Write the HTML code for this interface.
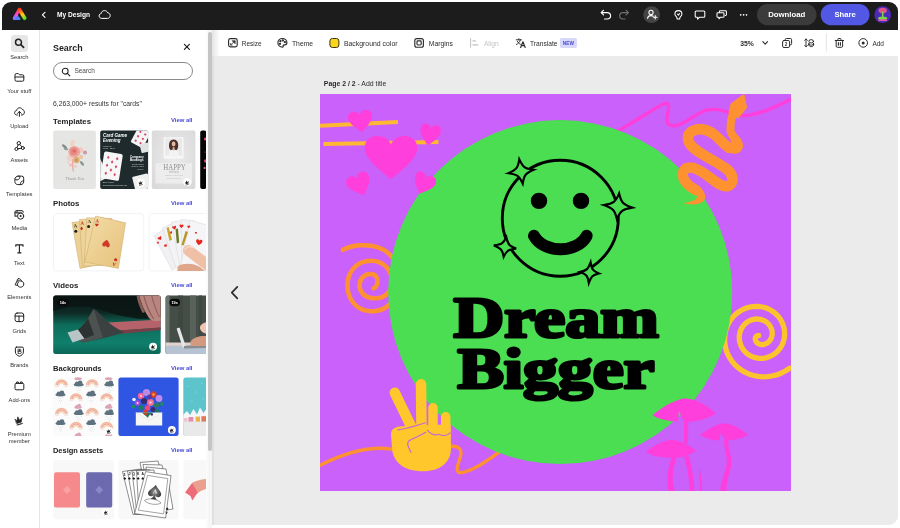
<!DOCTYPE html>
<html lang="en">
<head>
<meta charset="utf-8">
<title>My Design</title>
<style>
*{box-sizing:border-box;margin:0;padding:0}
html,body{width:900px;height:528px;overflow:hidden;background:#fff}
body{font-family:"Liberation Sans",sans-serif;color:#222;position:relative;-webkit-font-smoothing:antialiased}
.abs{position:absolute}
#hdr,#nav,#panel,#tb,#cv{will-change:transform}
#hdr{position:absolute;left:2px;top:2px;width:896px;height:27.5px;background:#1c1c1c;border-radius:9px 9px 0 0}
#hdr .t{position:absolute;color:#fff;font-size:7px;font-weight:bold;white-space:nowrap}
#nav{position:absolute;left:2px;top:30px;width:37.5px;height:498px;background:#fff;border-right:1px solid #e6e6e6}
.ni{position:absolute;left:-1.2px;width:37px;text-align:center;font-size:5.8px;color:#333;line-height:7.5px;white-space:nowrap}
.ni svg{display:block;margin:0 auto}
#panel{position:absolute;left:40px;top:30px;width:166px;height:498px;background:#fff;overflow:hidden}
.h2{position:absolute;left:13px;font-size:7.8px;font-weight:bold;color:#222;white-space:nowrap}
.va{position:absolute;right:13.5px;font-size:5.9px;font-weight:bold;color:#4a4ad6;white-space:nowrap}
.th{position:absolute;border-radius:2px;overflow:hidden}
.th svg{display:block}
#tb{position:absolute;left:213px;top:29.5px;width:685px;height:26.5px;background:#fff}
.tt{position:absolute;top:9.8px;font-size:6.5px;color:#2c2c2c;white-space:nowrap;line-height:8px}
#cv{position:absolute;left:213px;top:56px;width:685px;height:468.5px;background:#ebebeb;border-radius:0 0 9px 0}
</style>
</head>
<body>
<!-- HEADER -->
<div id="hdr">
<svg class="abs" style="left:0;top:0" width="896" height="28" viewBox="2 2 896 28">
<defs>
<linearGradient id="lgL" gradientUnits="userSpaceOnUse" x1="19.5" y1="8" x2="14" y2="20">
<stop offset="0" stop-color="#ff2a1a"/><stop offset="0.3" stop-color="#ff3f8e"/><stop offset="0.6" stop-color="#f050e0"/><stop offset="0.85" stop-color="#b766ff"/><stop offset="1" stop-color="#8a7aff"/>
</linearGradient>
<linearGradient id="lgF" gradientUnits="userSpaceOnUse" x1="13" y1="18" x2="21" y2="18">
<stop offset="0" stop-color="#b070ff"/><stop offset="0.4" stop-color="#5a78ff"/><stop offset="1" stop-color="#2e9cff"/>
</linearGradient>
<linearGradient id="lgR" gradientUnits="userSpaceOnUse" x1="19.5" y1="8" x2="25" y2="20">
<stop offset="0" stop-color="#ff2a1a"/><stop offset="0.3" stop-color="#ff7a10"/><stop offset="0.55" stop-color="#ffcc18"/><stop offset="0.8" stop-color="#8ee020"/><stop offset="1" stop-color="#22dd22"/>
</linearGradient>
</defs>
<!-- logo -->
<g fill="none" stroke-linecap="round" stroke-linejoin="round">
<path d="M19.5,9.6 L14.7,18.2" stroke="url(#lgL)" stroke-width="3.7"/>
<path d="M14.7,18.25 L19.4,18.25" stroke="url(#lgF)" stroke-width="3.5"/>
<path d="M19.4,13.2 L23,20.8" stroke="#1c1c1c" stroke-width="3.2" stroke-linecap="butt"/>
<path d="M19.5,9.6 L24.7,18.2" stroke="url(#lgR)" stroke-width="3.7"/>
</g>
<!-- back chevron -->
<path d="M45,12.4 L42.4,14.9 L45,17.4" fill="none" stroke="#fff" stroke-width="1.15" stroke-linecap="round" stroke-linejoin="round"/>
<!-- cloud -->
<path d="M101.8,18.4 C100,18.4 99.1,17.1 99.1,15.9 C99.1,14.6 100,13.6 101.2,13.5 C101.4,11.8 102.8,10.6 104.5,10.6 C106,10.6 107.2,11.5 107.7,12.8 C109.2,12.9 110.2,14.1 110.2,15.5 C110.2,17.1 109,18.4 107.4,18.4 Z" fill="none" stroke="#fff" stroke-width="1" stroke-linejoin="round"/>
<!-- undo -->
<g fill="none" stroke="#fff" stroke-width="1.2" stroke-linecap="round" stroke-linejoin="round">
<path d="M603.4,10.3 L601.2,12.6 L603.6,14.9"/>
<path d="M601.5,12.6 L607,12.6 C609.2,12.6 610.6,14 610.6,15.8 C610.6,17.6 609.2,19 607,19 L604.6,19"/>
</g>
<!-- redo -->
<g fill="none" stroke="#6e6e6e" stroke-width="1.2" stroke-linecap="round" stroke-linejoin="round">
<path d="M626.2,10.3 L628.4,12.6 L626,14.9"/>
<path d="M628.1,12.6 L623.2,12.6 C621,12.6 619.6,14 619.6,15.8 C619.6,17.6 621,19 623.2,19 L625,19"/>
</g>
<!-- invite -->
<circle cx="651.6" cy="14.7" r="8.4" fill="#444"/>
<g fill="none" stroke="#fff" stroke-width="1.05" stroke-linecap="round" stroke-linejoin="round">
<circle cx="651" cy="12.4" r="2.1"/>
<path d="M647.6,18.4 C647.8,16.5 649.3,15.6 651,15.6 C651.9,15.6 652.6,15.8 653.2,16.2"/>
<path d="M655.2,15.4 L655.2,19 M653.4,17.2 L657,17.2"/>
</g>
<!-- bulb -->
<g fill="none" stroke="#fff" stroke-width="1.05" stroke-linecap="round" stroke-linejoin="round">
<path d="M678.4,10.6 C680.5,10.6 681.9,12.1 681.9,13.9 C681.9,15.2 681.2,16 680.5,16.7 C680,17.2 679.8,17.6 679.8,18.4 L679.6,19 L677.2,19 L677,18.4 C677,17.6 676.8,17.2 676.3,16.7 C675.6,16 674.9,15.2 674.9,13.9 C674.9,12.1 676.3,10.6 678.4,10.6 Z"/>
<path d="M677.5,14.2 L678.4,15.2 L679.5,13.6"/>
</g>
<!-- comment -->
<path d="M696.2,11 L703.8,11 Q704.8,11 704.8,12 L704.8,16.2 Q704.8,17.2 703.8,17.2 L699.6,17.2 L697.6,19.2 L697.6,17.2 L696.2,17.2 Q695.2,17.2 695.2,16.2 L695.2,12 Q695.2,11 696.2,11 Z" fill="none" stroke="#fff" stroke-width="1.05" stroke-linejoin="round"/>
<!-- chat -->
<g fill="none" stroke="#fff" stroke-width="1.05" stroke-linejoin="round" stroke-linecap="round">
<path d="M719.4,12.6 L719.4,11.6 Q719.4,10.8 720.2,10.8 L725.6,10.8 Q726.4,10.8 726.4,11.6 L726.4,14.6 Q726.4,15.4 725.6,15.4 L725.2,15.4"/>
<path d="M717.8,12.8 L723.2,12.8 Q724,12.8 724,13.6 L724,16.4 Q724,17.2 723.2,17.2 L720.6,17.2 L719,18.8 L719,17.2 L717.8,17.2 Q717,17.2 717,16.4 L717,13.6 Q717,12.8 717.8,12.8 Z"/>
</g>
<!-- more -->
<g fill="#fff"><circle cx="740.7" cy="14.8" r="0.85"/><circle cx="743.6" cy="14.8" r="0.85"/><circle cx="746.5" cy="14.8" r="0.85"/></g>
<!-- download -->
<rect x="757" y="4" width="59.5" height="21.3" rx="10.65" fill="#3b3b3b"/>
<!-- share -->
<rect x="820.7" y="4" width="48.8" height="21.3" rx="10.65" fill="#5258e4"/>
<!-- avatar -->
<clipPath id="avc"><circle cx="882.7" cy="14.7" r="8.4"/></clipPath>
<circle cx="882.7" cy="14.7" r="8.4" fill="#4a2bb8"/>
<g clip-path="url(#avc)">
<ellipse cx="882.7" cy="10.6" rx="4.2" ry="2.8" fill="#e0508a"/>
<rect x="881.9" y="11.5" width="1.6" height="6" fill="#7ad24a"/>
<ellipse cx="882.7" cy="18.2" rx="4.6" ry="1.7" fill="#7ad24a"/>
<rect x="878.3" y="19.4" width="8.8" height="1.6" fill="#e85aa0"/>
</g>
</svg>
<div class="t" style="left:55px;top:8.9px;font-size:6.6px;line-height:8px">My Design</div>
<div class="t" style="left:755px;top:8.6px;width:59.5px;text-align:center;font-size:7.8px;line-height:8px">Download</div>
<div class="t" style="left:818.7px;top:8.6px;width:48.8px;text-align:center;font-size:7.7px;line-height:8px">Share</div>
</div>
<!-- LEFT NAV -->
<div id="nav">
<div class="abs" style="left:9px;top:5px;width:17.3px;height:16.6px;border-radius:3px;background:#e6e6e6"></div>
<svg class="abs" style="left:0;top:0" width="38" height="498" viewBox="2 30 38 498">
<g transform="translate(19.4,43.2)" fill="none" stroke="#222" stroke-width="1" stroke-linecap="round" stroke-linejoin="round"><circle cx="-0.9" cy="-0.9" r="3" stroke-width="1.5"/><path d="M1.4,1.4 L4.2,4.2" stroke-width="1.7"/></g>
<g transform="translate(19.4,77.4)" fill="none" stroke="#222" stroke-width="1" stroke-linecap="round" stroke-linejoin="round"><path d="M-4.4,-2.6 Q-4.4,-3.8 -3.2,-3.8 L-1,-3.8 L0.2,-2.6 L3.2,-2.6 Q4.4,-2.6 4.4,-1.4 L4.4,2.6 Q4.4,3.8 3.2,3.8 L-3.2,3.8 Q-4.4,3.8 -4.4,2.6 Z M-4.4,-0.4 L4.4,-0.4"/></g>
<g transform="translate(19.4,111.8)" fill="none" stroke="#222" stroke-width="1" stroke-linecap="round" stroke-linejoin="round"><path d="M-2,3.2 L-2.6,3.2 C-4,3.2 -4.8,2 -4.8,0.9 C-4.8,-0.3 -3.9,-1.3 -2.7,-1.4 C-2.5,-3 -1.2,-4 0.3,-4 C1.7,-4 2.8,-3.2 3.2,-2 C4.4,-1.9 5,-0.8 5,0.4 C5,1.9 3.9,3.2 2.6,3.2 L2,3.2"/><path d="M0,4.6 L0,-0.2 M-1.9,1.6 L0,-0.4 L1.9,1.6"/></g>
<g transform="translate(19.4,146)" fill="none" stroke="#222" stroke-width="1" stroke-linecap="round" stroke-linejoin="round"><circle cx="-0.6" cy="-2.8" r="1.7"/><circle cx="-3" cy="3" r="1.5"/><circle cx="3.4" cy="2" r="1.5"/><path d="M-1.2,-1.2 L-2.5,1.6 M0.4,-1.4 L2.6,0.8 M-1.5,2.8 L1.9,2.2"/></g>
<g transform="translate(19.4,180.3)" fill="none" stroke="#222" stroke-width="1" stroke-linecap="round" stroke-linejoin="round"><path d="M-1.2,-4.2 L2.2,-4.2 Q4.3,-4.2 4.3,-2.1 L4.3,1.4 C4.3,3 3,4.3 1.4,4.3 L-1.6,4.3 C-3.2,4.3 -4.5,3 -4.5,1.4 L-4.5,-0.9 C-4.5,-2.7 -3,-4.2 -1.2,-4.2 Z"/><path d="M0.6,-4 C0.6,-2 -0.4,-0.6 -2.2,-0.4 C-3.4,-0.3 -4.2,-0.8 -4.4,-1.2 M1.2,4.2 C0.8,2.4 1.8,1 3,0.8 C3.6,0.7 4,0.9 4.2,1.1"/></g>
<g transform="translate(19.4,214.5)" fill="none" stroke="#222" stroke-width="1" stroke-linecap="round" stroke-linejoin="round"><path d="M-4.4,1.6 L-4.4,-2.6 Q-4.4,-3.8 -3.2,-3.8 L2.6,-3.8 Q3.8,-3.8 3.8,-2.6 L3.8,-2.2 M-4.4,-1.6 L2,-1.6 M-2.4,-3.6 L-2.4,-1.8 M-4.2,1.6 L-2.6,1.6"/><circle cx="1.2" cy="1.6" r="3.1"/><circle cx="1.2" cy="1.6" r="1" fill="#222" stroke="none"/></g>
<g transform="translate(19.4,248.8)" fill="none" stroke="#222" stroke-width="1" stroke-linecap="round" stroke-linejoin="round"><path d="M-3.6,-2.6 L-3.6,-4 L3.6,-4 L3.6,-2.6 M0,-4 L0,4 M-1.6,4 L1.6,4" stroke-width="1.15"/></g>
<g transform="translate(19.4,283)" fill="none" stroke="#222" stroke-width="1" stroke-linecap="round" stroke-linejoin="round"><path d="M-0.8,-4.4 C0.6,-4.4 1.8,-3.4 2,-2 C3.4,-1.6 4.4,-0.4 4.4,1 C4.4,2.8 3,4.2 1.2,4.2 C-0.2,4.2 -1.4,3.4 -1.8,2.2 L-3.6,2.2 Q-4.6,2.2 -4.1,1.3 L-2.2,-2.2 C-2.4,-3.4 -1.8,-4.4 -0.8,-4.4 Z M-2.2,-2 C-1,-2.4 1,-2.2 2,-1.8 M-1.9,2 C-2.2,0.6 -1.6,-0.6 -0.6,-1.2"/></g>
<g transform="translate(19.4,317.3)" fill="none" stroke="#222" stroke-width="1" stroke-linecap="round" stroke-linejoin="round"><rect x="-4.3" y="-4.3" width="8.6" height="8.6" rx="2"/><path d="M-4.3,-1.2 L4.3,-1.2 M-0.4,-1.2 L-0.4,4.3"/></g>
<g transform="translate(19.4,351.5)" fill="none" stroke="#222" stroke-width="1" stroke-linecap="round" stroke-linejoin="round"><path d="M-2.8,-4.4 L2.8,-4.4 Q4,-4.4 4,-3.2 L4,0.6 C4,2.8 2,4 0,4.8 C-2,4 -4,2.8 -4,0.6 L-4,-3.2 Q-4,-4.4 -2.8,-4.4 Z"/><path d="M-1.3,-2.4 L-1.3,2 L0.4,2 C1.4,2 1.9,1.4 1.9,0.8 C1.9,0.1 1.4,-0.3 0.6,-0.3 L-1.3,-0.3 M0.5,-0.3 C1.1,-0.3 1.5,-0.8 1.5,-1.4 C1.5,-2 1.1,-2.4 0.4,-2.4 Z" stroke-width="0.85"/></g>
<g transform="translate(19.4,385.8)" fill="none" stroke="#222" stroke-width="1" stroke-linecap="round" stroke-linejoin="round"><path d="M-4.4,-1.4 Q-4.4,-2.4 -3.4,-2.4 L3.4,-2.4 Q4.4,-2.4 4.4,-1.4 L4.4,3 Q4.4,4 3.4,4 L-3.4,4 Q-4.4,4 -4.4,3 Z M-2.8,-2.6 L-2.8,-3.8 L-1,-3.8 L-1,-2.6 M1,-2.6 L1,-3.8 L2.8,-3.8 L2.8,-2.6"/></g>
<g transform="translate(19.4,420.2)" fill="none" stroke="#222" stroke-width="1" stroke-linecap="round" stroke-linejoin="round"><path d="M-4.2,-1 L-2.4,0.6 L-1.6,-3.4 L0.2,0 L2.6,-2.6 L1.8,2 L-2.6,3.4 Z" fill="#222" stroke-width="0.6"/><path d="M-2.2,4.8 L2.8,3.2" stroke-width="1.1"/></g>
</svg>
<div class="ni" style="top:23.9px">Search</div>
<div class="ni" style="top:58.1px">Your stuff</div>
<div class="ni" style="top:92.5px">Upload</div>
<div class="ni" style="top:126.7px">Assets</div>
<div class="ni" style="top:161.0px">Templates</div>
<div class="ni" style="top:195.2px">Media</div>
<div class="ni" style="top:229.5px">Text</div>
<div class="ni" style="top:263.7px">Elements</div>
<div class="ni" style="top:298.0px">Grids</div>
<div class="ni" style="top:332.2px">Brands</div>
<div class="ni" style="top:366.5px">Add-ons</div>
<div class="ni" style="top:400.9px">Premium<br>member</div>
</div>
<!-- PANEL -->
<div id="panel">
<div class="abs" style="left:13px;top:12.9px;font-size:8.9px;font-weight:bold;line-height:11px;color:#1f1f1f">Search</div>
<svg class="abs" style="left:143.4px;top:13.1px" width="8" height="8" viewBox="0 0 8 8"><path d="M1.4,1.4 L6.4,6.4 M6.4,1.4 L1.4,6.4" stroke="#222" stroke-width="1.2" stroke-linecap="round"/></svg>
<div class="abs" style="left:13px;top:32.4px;width:139.5px;height:17.2px;border:1px solid #8a8a8a;border-radius:9px"></div>
<svg class="abs" style="left:20.5px;top:36.5px" width="10" height="10" viewBox="0 0 10 10"><circle cx="4.2" cy="4.2" r="2.9" fill="none" stroke="#222" stroke-width="1.05"/><path d="M6.4,6.4 L8.8,8.8" stroke="#222" stroke-width="1.15" stroke-linecap="round"/></svg>
<div class="abs" style="left:34.4px;top:37.2px;font-size:6.5px;line-height:8px;color:#4a4a4a">Search</div>
<div class="abs" style="left:13px;top:70px;font-size:6.78px;line-height:8px;color:#333;white-space:nowrap">6,263,000+ results for "cards"</div>
<div class="h2" style="top:86.5px;line-height:9px;font-size:7.8px">Templates</div>
<div class="va" style="top:86.4px;line-height:8px">View all</div>
<div class="h2" style="top:169.0px;line-height:9px;font-size:7.8px">Photos</div>
<div class="va" style="top:168.9px;line-height:8px">View all</div>
<div class="h2" style="top:251.4px;line-height:9px;font-size:7.8px">Videos</div>
<div class="va" style="top:251.3px;line-height:8px">View all</div>
<div class="h2" style="top:333.8px;line-height:9px;font-size:7.6px">Backgrounds</div>
<div class="va" style="top:333.7px;line-height:8px">View all</div>
<div class="h2" style="top:416.2px;line-height:9px;font-size:7.45px">Design assets</div>
<div class="va" style="top:416.1px;line-height:8px">View all</div>
<svg class="abs" style="left:0;top:0" width="166" height="498" viewBox="40 30 166 498" font-family="'Liberation Sans',sans-serif">
<defs>
<linearGradient id="gv1" x1="0" y1="0" x2="0" y2="1"><stop offset="0" stop-color="#0c1614"/><stop offset="0.3" stop-color="#0e2a25"/><stop offset="0.5" stop-color="#0d6d5c"/><stop offset="0.8" stop-color="#0f7f6b"/><stop offset="1" stop-color="#0b6455"/></linearGradient>
<linearGradient id="gtan" x1="0" y1="0" x2="1" y2="1"><stop offset="0" stop-color="#f3dca6"/><stop offset="1" stop-color="#e6c17c"/></linearGradient>
<radialGradient id="gt3" cx="0.5" cy="0.45" r="0.7"><stop offset="0" stop-color="#ecebeb"/><stop offset="1" stop-color="#d9d8d8"/></radialGradient>
<radialGradient id="gsp" cx="0.5" cy="0.5" r="0.6"><stop offset="0" stop-color="#999"/><stop offset="1" stop-color="#222"/></radialGradient>
<symbol id="crown" viewBox="-5 -5 10 10"><circle r="4.4" fill="#fff"/><path d="M-2.6,-0.6 L-1.5,0.4 L-1,-2.2 L0.1,0 L1.7,-1.7 L1.1,1.3 L-1.7,2.2 Z" fill="#222"/><path d="M-1.4,3 L1.7,2" stroke="#222" stroke-width="0.7" stroke-linecap="round"/></symbol>
<clipPath id="ct0"><rect x="53.2" y="130.4" width="42.7" height="58.6" rx="2"/></clipPath>
<clipPath id="ct1"><rect x="100.2" y="130.4" width="47.9" height="58.6" rx="2"/></clipPath>
<clipPath id="ct2"><rect x="151.8" y="130.4" width="43.6" height="58.6" rx="2"/></clipPath>
<clipPath id="ct3"><rect x="200.2" y="130.4" width="6" height="58.6" rx="2"/></clipPath>
<clipPath id="cp0"><rect x="53.2" y="213.3" width="90.7" height="57.8" rx="3"/></clipPath>
<clipPath id="cp1"><rect x="148.7" y="213.3" width="70" height="57.8" rx="3"/></clipPath>
<clipPath id="cv0"><rect x="53.2" y="295.5" width="107.5" height="58.5" rx="2.5"/></clipPath>
<clipPath id="cv1"><rect x="165.5" y="295.5" width="60" height="58.5" rx="2.5"/></clipPath>
<clipPath id="cb0"><rect x="53.2" y="377.5" width="60.6" height="58.6" rx="2.5"/></clipPath>
<clipPath id="cd0"><rect x="53.2" y="460" width="60.6" height="59.3" rx="2.5"/></clipPath>
<clipPath id="cb1"><rect x="118.4" y="377.5" width="60.2" height="58.6" rx="2.5"/></clipPath>
<clipPath id="cd1"><rect x="118.4" y="460" width="60.2" height="59.3" rx="2.5"/></clipPath>
<clipPath id="cb2"><rect x="183.3" y="377.5" width="40" height="58.6" rx="2.5"/></clipPath>
<clipPath id="cd2"><rect x="183.3" y="460" width="40" height="59.3" rx="2.5"/></clipPath>
</defs>
<g clip-path="url(#ct0)"><rect x="53" y="130" width="44" height="60" fill="#e5e5e3"/>
<g>
<ellipse cx="64.5" cy="146.5" rx="3" ry="1.3" fill="#7f8d8c" transform="rotate(35 64.5 146.5)"/>
<ellipse cx="66" cy="149" rx="2.4" ry="1.1" fill="#8f9c98" transform="rotate(15 66 149)"/>
<ellipse cx="82" cy="163.4" rx="2.8" ry="1.3" fill="#8a9894" transform="rotate(50 82 163.4)"/>
<ellipse cx="72.5" cy="143" rx="2.2" ry="3.4" fill="#f1d3c4" transform="rotate(15 72.5 143)"/>
<circle cx="70" cy="158" r="3.2" fill="#f3cfc8"/>
<circle cx="80.5" cy="150" r="2.8" fill="#f1c9c0"/>
<circle cx="85" cy="152.6" r="2" fill="#c99aa6"/>
<circle cx="74.3" cy="151.8" r="5.9" fill="#efa59c"/>
<circle cx="73.8" cy="151.4" r="3.8" fill="#e78a84"/>
<circle cx="74.2" cy="151" r="1.8" fill="#d9706e"/>
<circle cx="76.4" cy="160" r="3.3" fill="#ddb07a"/>
<circle cx="76.4" cy="160" r="1.5" fill="#c8965c"/>
<circle cx="81" cy="157" r="2.2" fill="#ecc4a4"/>
<path d="M72.6,160 C73,164 72,167 73.4,171" stroke="#efaaa6" stroke-width="1.4" fill="none" stroke-linecap="round"/>
<circle cx="70.6" cy="165" r="1.4" fill="#f2b6b2"/><circle cx="75.4" cy="166.4" r="1.2" fill="#f0c0bc"/><circle cx="68" cy="162.4" r="1.1" fill="#f5cdc8"/>
</g>
<text x="74.6" y="180.3" font-family="'Liberation Serif',serif" font-style="italic" font-size="4.4" fill="#9a9a98" text-anchor="middle">Thank You</text>
</g>
<g clip-path="url(#ct1)"><rect x="100" y="130" width="49" height="60" fill="#1e2a2c"/>
<g transform="rotate(28 140 139)"><rect x="133" y="128" width="13.5" height="18" rx="1.2" fill="#f4f4f4"/><g fill="#d6486a"><circle cx="137" cy="132.5" r="1.1"/><circle cx="142.5" cy="132.5" r="1.1"/><circle cx="137" cy="137.5" r="1.1"/><circle cx="142.5" cy="137.5" r="1.1"/><circle cx="137" cy="142.5" r="1.1"/><circle cx="142.5" cy="142.5" r="1.1"/></g></g>
<g transform="rotate(-14 144 148)"><rect x="140.5" y="143.5" width="9" height="9" rx="1" fill="#dfe3e1"/></g>
<g transform="rotate(-24 100 168)"><rect x="92" y="158" width="12" height="22" rx="1.2" fill="#ededed"/></g>
<g transform="rotate(9 111.5 166)"><rect x="102.2" y="152.6" width="18.8" height="27" rx="1.8" fill="#f7f7f7"/><g fill="#d6486a">
<path d="M107,156.3 L108.3,158 L107,159.7 L105.7,158 Z"/>
<path d="M116,156.3 L117.3,158 L116,159.7 L114.7,158 Z"/>
<path d="M111.5,160.3 L112.8,162 L111.5,163.7 L110.2,162 Z"/>
<path d="M107,164.3 L108.3,166 L107,167.7 L105.7,166 Z"/>
<path d="M116,164.3 L117.3,166 L116,167.7 L114.7,166 Z"/>
<path d="M111.5,168.3 L112.8,170 L111.5,171.7 L110.2,170 Z"/>
<path d="M107,172.3 L108.3,174 L107,175.7 L105.7,174 Z"/>
<path d="M116,172.3 L117.3,174 L116,175.7 L114.7,174 Z"/>
</g></g>
<g transform="rotate(-14 141 182)"><rect x="133.5" y="175" width="16" height="18" rx="1.2" fill="#eef0ee"/></g>
<text font-size="4.5" font-weight="bold" font-style="italic" fill="#fff"><tspan x="103" y="137.4">Card Game</tspan><tspan x="103" y="142.4">Evening</tspan></text>
<text font-size="2" fill="#cfd6d6"><tspan x="103.2" y="146.6">Friday 09</tspan><tspan x="103.2" y="149.4">19:00 - 22:00</tspan></text>
<text font-size="3" font-weight="bold" fill="#fff" text-anchor="end"><tspan x="143.6" y="157.5">Company</tspan><tspan x="143.6" y="161.3">Bookings</tspan></text>
<text font-size="1.9" fill="#cfd6d6" text-anchor="end"><tspan x="143.6" y="164.6">Private rooms</tspan><tspan x="143.6" y="167.2">Reserve yours</tspan><tspan x="143.6" y="169.8">for only</tspan></text>
<text font-size="1.9" fill="#cfd6d6"><tspan x="102.8" y="182.8">Book a game</tspan><tspan x="102.8" y="185.8">www.gamesevening.site.com</tspan></text>
<use href="#crown" x="136.4" y="178.2" width="9" height="9"/>
</g>
<g clip-path="url(#ct2)"><rect x="151" y="130" width="46" height="60" fill="url(#gt3)"/>
<rect x="155.5" y="163" width="36.5" height="20.5" fill="#f1f0f0" opacity="0.75"/>
<rect x="163.6" y="137.2" width="20" height="21.6" fill="#f6f6f6"/>
<rect x="165.2" y="138.6" width="16.8" height="17" fill="#e9e9ea"/>
<path d="M169.2,147.5 C168.4,142.5 170.4,139.6 173.6,139.6 C176.8,139.6 178.8,142.5 178,147.5 C177.6,149.5 176.4,150.3 175.4,150.3 L171.8,150.3 C170.8,150.3 169.6,149.5 169.2,147.5 Z" fill="#4a3028"/>
<ellipse cx="173.6" cy="144" rx="1.9" ry="2.4" fill="#e4b9a4"/>
<path d="M168.4,155.6 C168.6,151.6 170.6,149.4 173.6,149.4 C176.6,149.4 178.6,151.6 178.8,155.6 Z" fill="#f3f3f5"/>
<path d="M172.6,147.2 L174.6,147.2 L174.4,150.4 L172.8,150.4 Z" fill="#e0b29c"/>
<text x="174.5" y="169.8" font-family="'Liberation Serif',serif" font-size="7.3" fill="#8e8e8e" text-anchor="middle" textLength="22.5" lengthAdjust="spacingAndGlyphs">HAPPY</text>
<text x="174" y="173.2" font-family="'Liberation Serif',serif" font-style="italic" font-size="3" fill="#aaa" text-anchor="middle">birthday</text>
<text font-size="1.7" fill="#b4b4b4" text-anchor="middle"><tspan x="174" y="176.4">wishing you all the best</tspan><tspan x="174" y="178.6">on your special day</tspan></text>
<use href="#crown" x="182.8" y="177.8" width="9" height="9"/>
</g>
<g clip-path="url(#ct3)"><rect x="200" y="130" width="7" height="60" fill="#050505"/><circle cx="205.5" cy="139" r="1.6" fill="#e8407a"/><circle cx="205.8" cy="161" r="1.8" fill="#e8407a"/><circle cx="204.6" cy="168" r="1.1" fill="#f06090"/><circle cx="205" cy="152" r="0.6" fill="#e8407a"/></g>
<rect x="53.5" y="213.6" width="90.2" height="57.3" rx="3" fill="#fff" stroke="#ededed" stroke-width="0.7"/>
<g clip-path="url(#cp0)">
<path d="M72,222.5 L97,219.5 L107,262 L80,268.5 Z" fill="#ecd095" stroke="#c9a865" stroke-width="0.5" stroke-linejoin="round"/>
<path d="M79.5,219.5 L104,218 L110,263 L82.5,267.5 Z" fill="#eed49b" stroke="#c9a865" stroke-width="0.5" stroke-linejoin="round"/>
<path d="M86.8,217.8 L112,218.5 L113,265 L84,266 Z" fill="#f0d7a0" stroke="#c9a865" stroke-width="0.5" stroke-linejoin="round"/>
<path d="M95.5,216 L125.6,222.8 L118.4,268.4 L84.8,262 Z" fill="url(#gtan)" stroke="#c9a865" stroke-width="0.5" stroke-linejoin="round"/>
<g font-family="'Liberation Serif',serif" font-weight="bold" font-size="5">
<text x="73.6" y="227.6" fill="#2a2a22" transform="rotate(-8 75 226)">A</text>
<text x="80.4" y="225" fill="#c8281e" transform="rotate(-4 82 223)">A</text>
<text x="87.6" y="223.4" fill="#2a2a22">A</text>
<text x="95.6" y="222.6" fill="#c8281e" transform="rotate(10 97 221)">A</text>
</g>
<circle cx="75.8" cy="231.2" r="1.5" fill="#1e1e18"/><path d="M81.6,226.4 L83,228.4 L81.6,230.4 L80.2,228.4 Z" fill="#c8281e"/><circle cx="88.6" cy="226.6" r="1.5" fill="#1e1e18"/>
<path transform="translate(97,223.6) rotate(12) scale(3.4)" d="M0,0.9 C-0.15,0.75 -0.5,0.5 -0.5,0.25 C-0.5,0.05 -0.35,0 -0.25,0 C-0.12,0 -0.03,0.08 0,0.18 C0.03,0.08 0.12,0 0.25,0 C0.35,0 0.5,0.05 0.5,0.25 C0.5,0.5 0.15,0.75 0,0.9 Z" fill="#c8281e"/>
<path transform="translate(105.6,246.8) rotate(192) scale(7.6,8)" d="M0,0.9 C-0.15,0.75 -0.5,0.5 -0.5,0.25 C-0.5,0.05 -0.35,0 -0.25,0 C-0.12,0 -0.03,0.08 0,0.18 C0.03,0.08 0.12,0 0.25,0 C0.35,0 0.5,0.05 0.5,0.25 C0.5,0.5 0.15,0.75 0,0.9 Z" fill="#cf3a2c"/>
<path transform="translate(115.4,261) rotate(192) scale(3.4)" d="M0,0.9 C-0.15,0.75 -0.5,0.5 -0.5,0.25 C-0.5,0.05 -0.35,0 -0.25,0 C-0.12,0 -0.03,0.08 0,0.18 C0.03,0.08 0.12,0 0.25,0 C0.35,0 0.5,0.05 0.5,0.25 C0.5,0.5 0.15,0.75 0,0.9 Z" fill="#c8281e"/>
<text x="112.4" y="266.2" font-family="'Liberation Serif',serif" font-weight="bold" font-size="5" fill="#c8281e" transform="rotate(190 114.2 264.4)">A</text>
</g>
<rect x="149" y="213.6" width="70" height="57.3" rx="3" fill="#fff" stroke="#ededed" stroke-width="0.7"/>
<g clip-path="url(#cp1)">
<path d="M154,236 L168,226 L186,262 L172,270 Z" fill="#f1f1f3" stroke="#d4d4d8" stroke-width="0.5" stroke-linejoin="round"/>
<path d="M162.5,228 L177,221.5 L189,262 L176,268 Z" fill="#f3f3f5" stroke="#d4d4d8" stroke-width="0.5" stroke-linejoin="round"/>
<path d="M171.5,222 L186,220 L192,262 L180,266 Z" fill="#f4f4f6" stroke="#d4d4d8" stroke-width="0.5" stroke-linejoin="round"/>
<path d="M181,219.5 L195,221 L196,266 L182,266 Z" fill="#f3f3f5" stroke="#d4d4d8" stroke-width="0.5" stroke-linejoin="round"/>
<path d="M190,220 L210,226 L204,272 L180,268 Z" fill="#f5f5f7" stroke="#d4d4d8" stroke-width="0.5" stroke-linejoin="round"/>
<path transform="translate(159,237) rotate(-30) scale(4)" d="M0,0.9 C-0.15,0.75 -0.5,0.5 -0.5,0.25 C-0.5,0.05 -0.35,0 -0.25,0 C-0.12,0 -0.03,0.08 0,0.18 C0.03,0.08 0.12,0 0.25,0 C0.35,0 0.5,0.05 0.5,0.25 C0.5,0.5 0.15,0.75 0,0.9 Z" fill="#e5261f"/>
<path transform="translate(165,244.5) rotate(-30) scale(3)" d="M0,0.9 C-0.15,0.75 -0.5,0.5 -0.5,0.25 C-0.5,0.05 -0.35,0 -0.25,0 C-0.12,0 -0.03,0.08 0,0.18 C0.03,0.08 0.12,0 0.25,0 C0.35,0 0.5,0.05 0.5,0.25 C0.5,0.5 0.15,0.75 0,0.9 Z" fill="#e5261f"/>
<path transform="translate(170.5,231.5) rotate(-20) scale(3)" d="M0,0.9 C-0.15,0.75 -0.5,0.5 -0.5,0.25 C-0.5,0.05 -0.35,0 -0.25,0 C-0.12,0 -0.03,0.08 0,0.18 C0.03,0.08 0.12,0 0.25,0 C0.35,0 0.5,0.05 0.5,0.25 C0.5,0.5 0.15,0.75 0,0.9 Z" fill="#e5261f"/>
<path transform="translate(174,226) rotate(-10) scale(4)" d="M0,0.9 C-0.15,0.75 -0.5,0.5 -0.5,0.25 C-0.5,0.05 -0.35,0 -0.25,0 C-0.12,0 -0.03,0.08 0,0.18 C0.03,0.08 0.12,0 0.25,0 C0.35,0 0.5,0.05 0.5,0.25 C0.5,0.5 0.15,0.75 0,0.9 Z" fill="#e5261f"/>
<path transform="translate(181.5,224.5) rotate(0) scale(4)" d="M0,0.9 C-0.15,0.75 -0.5,0.5 -0.5,0.25 C-0.5,0.05 -0.35,0 -0.25,0 C-0.12,0 -0.03,0.08 0,0.18 C0.03,0.08 0.12,0 0.25,0 C0.35,0 0.5,0.05 0.5,0.25 C0.5,0.5 0.15,0.75 0,0.9 Z" fill="#e5261f"/>
<path transform="translate(188.8,225.5) rotate(5) scale(3)" d="M0,0.9 C-0.15,0.75 -0.5,0.5 -0.5,0.25 C-0.5,0.05 -0.35,0 -0.25,0 C-0.12,0 -0.03,0.08 0,0.18 C0.03,0.08 0.12,0 0.25,0 C0.35,0 0.5,0.05 0.5,0.25 C0.5,0.5 0.15,0.75 0,0.9 Z" fill="#e5261f"/>
<path transform="translate(199.5,239.5) rotate(8) scale(6.4)" d="M0,0.9 C-0.15,0.75 -0.5,0.5 -0.5,0.25 C-0.5,0.05 -0.35,0 -0.25,0 C-0.12,0 -0.03,0.08 0,0.18 C0.03,0.08 0.12,0 0.25,0 C0.35,0 0.5,0.05 0.5,0.25 C0.5,0.5 0.15,0.75 0,0.9 Z" fill="#e5261f"/>
<path transform="translate(157.4,242) rotate(-30) scale(2.4)" d="M0,0.9 C-0.15,0.75 -0.5,0.5 -0.5,0.25 C-0.5,0.05 -0.35,0 -0.25,0 C-0.12,0 -0.03,0.08 0,0.18 C0.03,0.08 0.12,0 0.25,0 C0.35,0 0.5,0.05 0.5,0.25 C0.5,0.5 0.15,0.75 0,0.9 Z" fill="#e5261f"/>
<path transform="translate(196,232) rotate(10) scale(2.2)" d="M0,0.9 C-0.15,0.75 -0.5,0.5 -0.5,0.25 C-0.5,0.05 -0.35,0 -0.25,0 C-0.12,0 -0.03,0.08 0,0.18 C0.03,0.08 0.12,0 0.25,0 C0.35,0 0.5,0.05 0.5,0.25 C0.5,0.5 0.15,0.75 0,0.9 Z" fill="#e5261f"/>
<path d="M166.6,228 L169.5,241 L172,239.5 L168.6,227 Z" fill="#c9a32e"/><path d="M175.5,229 L176.8,243.5 L179.2,242.5 L178,228.5 Z" fill="#6b7a2a"/><path d="M185.6,231 L181.4,245 L183.6,245.6 L188,232 Z" fill="#b9962c"/>
<path d="M178,266 C184,262.5 194,263 200,267 L206,272 L177,272 Z" fill="#dfa68c"/>
<path d="M188.5,250.5 L210,267" stroke="#efbfa6" stroke-width="11" stroke-linecap="round" fill="none"/>
<path d="M184.8,249.6 C186.4,246.4 190.4,245.6 193,247.6" fill="none" stroke="#f8dccd" stroke-width="1.3" stroke-linecap="round"/>
</g>
<g clip-path="url(#cv0)"><rect x="53" y="295" width="108" height="60" fill="url(#gv1)"/>
<path d="M53,295 L161,295 L161,317 C140,322 120,316 98,309 C84,305 68,306 53,311 Z" fill="#0a1513" opacity="0.85"/>
<path d="M108,322.5 L161,319.5 L161,327.5 L112,331 Z" fill="#b5626b"/>
<path d="M112,331 L161,327.5 L161,330 L118,334 Z" fill="#7a3c45"/>
<path d="M93.5,309 C98,311 104,318 108,322 C114,327 120,330 124,332.5 C110,337 95,340 83,342.5 C79,340 74,338 71,336.5 C80,330 88,320 93.5,309 Z" fill="#3b4140"/>
<path d="M93.5,309 C96,316 99,326 103,337.5 C96,339.5 89,341.2 83,342.5 C79,340 74,338 71,336.5 C80,330 88,320 93.5,309 Z" fill="#4b5250"/>
<path d="M67.5,332.5 L78,329.5 L84.5,338.5 L72.5,342.5 Z" fill="#b9c4c6"/>
<path d="M78,329.5 C82,327 86,322 88,318 L94,335 L84.5,338.5 Z" fill="#2c3231"/>
<path d="M139,295 C141,303 144,311 149,318 C152,321.5 156,321.5 161,320.5 L161,295 Z" fill="#b9857f"/>
<path d="M143.5,295 C146,304 149,313 154,319" stroke="#8c5a58" stroke-width="1.1" fill="none"/><path d="M151.5,295 C153.5,303 156,311 159.5,317" stroke="#8c5a58" stroke-width="1" fill="none"/>
<path d="M139,295 C140,300 142,306 145,312 L142.5,313 C139.5,307 137,300 136.5,295 Z" fill="#8a5c58"/>
<rect x="57.6" y="298.8" width="10.6" height="7.4" rx="3.7" fill="#0a0a0a"/><text x="62.9" y="304" font-size="3.9" font-weight="bold" fill="#fff" text-anchor="middle">14s</text>
<use href="#crown" x="148.6" y="342.1" width="9" height="9"/>
</g>
<g clip-path="url(#cv1)"><rect x="165" y="295" width="45" height="60" fill="#454d47"/>
<rect x="165.5" y="295" width="4" height="60" fill="#6a726c"/><rect x="178" y="295" width="5" height="60" fill="#3f4742"/><rect x="190" y="295" width="6" height="60" fill="#59615b"/><rect x="199" y="295" width="3" height="60" fill="#3f4742"/>
<rect x="165" y="345.5" width="45" height="9" fill="#b5c3d2"/><rect x="165" y="342.5" width="45" height="3.4" fill="#e0d2cc"/>
<path d="M176.6,328.6 L179.6,327.6 L186,347 L182.6,347.6 Z" fill="#e4e6e8"/>
<path d="M184,346 L206,344 L206,348 L184,348.5 Z" fill="#8a8e90"/>
<path d="M191,341 C194,337 200,335.5 206,336 L206,346 L192,346 C190,345 190,342.5 191,341 Z" fill="#d39a80"/>
<path d="M201,325 C203,323 206,322 208,322 L208,334 C205,334 202,332 200.5,330 C199.5,328 200,326 201,325 Z" fill="#f0c4b4"/>
<rect x="169.4" y="298.8" width="10.6" height="7.4" rx="3.7" fill="#0a0a0a"/><text x="174.7" y="304" font-size="3.9" font-weight="bold" fill="#fff" text-anchor="middle">19s</text>
</g>
<g clip-path="url(#cb0)"><rect x="53" y="377" width="62" height="60" fill="#fbfbfb"/>
<path d="M25.3,356.9 A5.6,5.6 0 0 1 36.5,356.9" fill="none" stroke="#f2b99a" stroke-width="1.5"/><path d="M26.8,356.9 A4.1,4.1 0 0 1 35.0,356.9" fill="none" stroke="#f0a6a0" stroke-width="1.5"/><path d="M28.2,356.9 A2.7,2.7 0 0 1 33.6,356.9" fill="none" stroke="#f6d2b0" stroke-width="1.5"/><ellipse cx="26.3" cy="357.5" rx="2.2" ry="1.2" fill="#f4e6e0"/><ellipse cx="35.5" cy="357.5" rx="2.2" ry="1.2" fill="#f4e6e0"/>
<g fill="#5d727e"><ellipse cx="48.1" cy="356.2" rx="5.0" ry="1.7"/><circle cx="46.3" cy="355.0" r="2.0"/><circle cx="49.5" cy="354.4" r="2.4"/></g>
<circle cx="45.7" cy="359.0" r="0.45" fill="#9fc2d4"/><circle cx="48.1" cy="360.0" r="0.45" fill="#9fc2d4"/><circle cx="50.5" cy="359.0" r="0.45" fill="#9fc2d4"/><circle cx="46.9" cy="361.8" r="0.45" fill="#9fc2d4"/><circle cx="49.3" cy="361.8" r="0.45" fill="#9fc2d4"/><circle cx="48.1" cy="363.8" r="0.45" fill="#9fc2d4"/>
<g fill="#dba5b6"><ellipse cx="47.5" cy="350.2" rx="3.8" ry="1.3"/><circle cx="46.1" cy="349.0" r="1.5"/><circle cx="48.5" cy="348.4" r="1.8"/></g>
<g fill="#5d727e"><ellipse cx="29.9" cy="366.2" rx="5.0" ry="1.7"/><circle cx="28.1" cy="365.0" r="2.0"/><circle cx="31.3" cy="364.4" r="2.4"/></g>
<circle cx="27.5" cy="369.0" r="0.45" fill="#9fc2d4"/><circle cx="29.9" cy="370.0" r="0.45" fill="#9fc2d4"/><circle cx="32.3" cy="369.0" r="0.45" fill="#9fc2d4"/><circle cx="28.7" cy="371.8" r="0.45" fill="#9fc2d4"/><circle cx="31.1" cy="371.8" r="0.45" fill="#9fc2d4"/><circle cx="29.9" cy="373.8" r="0.45" fill="#9fc2d4"/>
<path d="M39.9,370.9 A5.6,5.6 0 0 1 51.1,370.9" fill="none" stroke="#f2b99a" stroke-width="1.5"/><path d="M41.4,370.9 A4.1,4.1 0 0 1 49.6,370.9" fill="none" stroke="#f0a6a0" stroke-width="1.5"/><path d="M42.8,370.9 A2.7,2.7 0 0 1 48.2,370.9" fill="none" stroke="#f6d2b0" stroke-width="1.5"/><ellipse cx="40.9" cy="371.5" rx="2.2" ry="1.2" fill="#f4e6e0"/><ellipse cx="50.1" cy="371.5" rx="2.2" ry="1.2" fill="#f4e6e0"/>
<path d="M55.9,356.9 A5.6,5.6 0 0 1 67.1,356.9" fill="none" stroke="#f2b99a" stroke-width="1.5"/><path d="M57.4,356.9 A4.1,4.1 0 0 1 65.6,356.9" fill="none" stroke="#f0a6a0" stroke-width="1.5"/><path d="M58.8,356.9 A2.7,2.7 0 0 1 64.2,356.9" fill="none" stroke="#f6d2b0" stroke-width="1.5"/><ellipse cx="56.9" cy="357.5" rx="2.2" ry="1.2" fill="#f4e6e0"/><ellipse cx="66.1" cy="357.5" rx="2.2" ry="1.2" fill="#f4e6e0"/>
<g fill="#5d727e"><ellipse cx="78.7" cy="356.2" rx="5.0" ry="1.7"/><circle cx="76.9" cy="355.0" r="2.0"/><circle cx="80.1" cy="354.4" r="2.4"/></g>
<circle cx="76.3" cy="359.0" r="0.45" fill="#9fc2d4"/><circle cx="78.7" cy="360.0" r="0.45" fill="#9fc2d4"/><circle cx="81.1" cy="359.0" r="0.45" fill="#9fc2d4"/><circle cx="77.5" cy="361.8" r="0.45" fill="#9fc2d4"/><circle cx="79.9" cy="361.8" r="0.45" fill="#9fc2d4"/><circle cx="78.7" cy="363.8" r="0.45" fill="#9fc2d4"/>
<g fill="#dba5b6"><ellipse cx="78.1" cy="350.2" rx="3.8" ry="1.3"/><circle cx="76.8" cy="349.0" r="1.5"/><circle cx="79.1" cy="348.4" r="1.8"/></g>
<g fill="#5d727e"><ellipse cx="60.5" cy="366.2" rx="5.0" ry="1.7"/><circle cx="58.7" cy="365.0" r="2.0"/><circle cx="61.9" cy="364.4" r="2.4"/></g>
<circle cx="58.1" cy="369.0" r="0.45" fill="#9fc2d4"/><circle cx="60.5" cy="370.0" r="0.45" fill="#9fc2d4"/><circle cx="62.9" cy="369.0" r="0.45" fill="#9fc2d4"/><circle cx="59.3" cy="371.8" r="0.45" fill="#9fc2d4"/><circle cx="61.7" cy="371.8" r="0.45" fill="#9fc2d4"/><circle cx="60.5" cy="373.8" r="0.45" fill="#9fc2d4"/>
<path d="M70.5,370.9 A5.6,5.6 0 0 1 81.7,370.9" fill="none" stroke="#f2b99a" stroke-width="1.5"/><path d="M72.0,370.9 A4.1,4.1 0 0 1 80.2,370.9" fill="none" stroke="#f0a6a0" stroke-width="1.5"/><path d="M73.4,370.9 A2.7,2.7 0 0 1 78.8,370.9" fill="none" stroke="#f6d2b0" stroke-width="1.5"/><ellipse cx="71.5" cy="371.5" rx="2.2" ry="1.2" fill="#f4e6e0"/><ellipse cx="80.7" cy="371.5" rx="2.2" ry="1.2" fill="#f4e6e0"/>
<path d="M86.5,356.9 A5.6,5.6 0 0 1 97.7,356.9" fill="none" stroke="#f2b99a" stroke-width="1.5"/><path d="M88.0,356.9 A4.1,4.1 0 0 1 96.2,356.9" fill="none" stroke="#f0a6a0" stroke-width="1.5"/><path d="M89.4,356.9 A2.7,2.7 0 0 1 94.8,356.9" fill="none" stroke="#f6d2b0" stroke-width="1.5"/><ellipse cx="87.5" cy="357.5" rx="2.2" ry="1.2" fill="#f4e6e0"/><ellipse cx="96.7" cy="357.5" rx="2.2" ry="1.2" fill="#f4e6e0"/>
<g fill="#5d727e"><ellipse cx="109.3" cy="356.2" rx="5.0" ry="1.7"/><circle cx="107.5" cy="355.0" r="2.0"/><circle cx="110.7" cy="354.4" r="2.4"/></g>
<circle cx="106.9" cy="359.0" r="0.45" fill="#9fc2d4"/><circle cx="109.3" cy="360.0" r="0.45" fill="#9fc2d4"/><circle cx="111.7" cy="359.0" r="0.45" fill="#9fc2d4"/><circle cx="108.1" cy="361.8" r="0.45" fill="#9fc2d4"/><circle cx="110.5" cy="361.8" r="0.45" fill="#9fc2d4"/><circle cx="109.3" cy="363.8" r="0.45" fill="#9fc2d4"/>
<g fill="#dba5b6"><ellipse cx="108.7" cy="350.2" rx="3.8" ry="1.3"/><circle cx="107.3" cy="349.0" r="1.5"/><circle cx="109.7" cy="348.4" r="1.8"/></g>
<g fill="#5d727e"><ellipse cx="91.1" cy="366.2" rx="5.0" ry="1.7"/><circle cx="89.3" cy="365.0" r="2.0"/><circle cx="92.5" cy="364.4" r="2.4"/></g>
<circle cx="88.7" cy="369.0" r="0.45" fill="#9fc2d4"/><circle cx="91.1" cy="370.0" r="0.45" fill="#9fc2d4"/><circle cx="93.5" cy="369.0" r="0.45" fill="#9fc2d4"/><circle cx="89.9" cy="371.8" r="0.45" fill="#9fc2d4"/><circle cx="92.3" cy="371.8" r="0.45" fill="#9fc2d4"/><circle cx="91.1" cy="373.8" r="0.45" fill="#9fc2d4"/>
<path d="M101.1,370.9 A5.6,5.6 0 0 1 112.3,370.9" fill="none" stroke="#f2b99a" stroke-width="1.5"/><path d="M102.6,370.9 A4.1,4.1 0 0 1 110.8,370.9" fill="none" stroke="#f0a6a0" stroke-width="1.5"/><path d="M104.0,370.9 A2.7,2.7 0 0 1 109.4,370.9" fill="none" stroke="#f6d2b0" stroke-width="1.5"/><ellipse cx="102.1" cy="371.5" rx="2.2" ry="1.2" fill="#f4e6e0"/><ellipse cx="111.3" cy="371.5" rx="2.2" ry="1.2" fill="#f4e6e0"/>
<path d="M117.1,356.9 A5.6,5.6 0 0 1 128.3,356.9" fill="none" stroke="#f2b99a" stroke-width="1.5"/><path d="M118.6,356.9 A4.1,4.1 0 0 1 126.8,356.9" fill="none" stroke="#f0a6a0" stroke-width="1.5"/><path d="M120.0,356.9 A2.7,2.7 0 0 1 125.4,356.9" fill="none" stroke="#f6d2b0" stroke-width="1.5"/><ellipse cx="118.1" cy="357.5" rx="2.2" ry="1.2" fill="#f4e6e0"/><ellipse cx="127.3" cy="357.5" rx="2.2" ry="1.2" fill="#f4e6e0"/>
<g fill="#5d727e"><ellipse cx="139.9" cy="356.2" rx="5.0" ry="1.7"/><circle cx="138.1" cy="355.0" r="2.0"/><circle cx="141.3" cy="354.4" r="2.4"/></g>
<circle cx="137.5" cy="359.0" r="0.45" fill="#9fc2d4"/><circle cx="139.9" cy="360.0" r="0.45" fill="#9fc2d4"/><circle cx="142.3" cy="359.0" r="0.45" fill="#9fc2d4"/><circle cx="138.7" cy="361.8" r="0.45" fill="#9fc2d4"/><circle cx="141.1" cy="361.8" r="0.45" fill="#9fc2d4"/><circle cx="139.9" cy="363.8" r="0.45" fill="#9fc2d4"/>
<g fill="#dba5b6"><ellipse cx="139.3" cy="350.2" rx="3.8" ry="1.3"/><circle cx="138.0" cy="349.0" r="1.5"/><circle cx="140.4" cy="348.4" r="1.8"/></g>
<g fill="#5d727e"><ellipse cx="121.7" cy="366.2" rx="5.0" ry="1.7"/><circle cx="119.9" cy="365.0" r="2.0"/><circle cx="123.1" cy="364.4" r="2.4"/></g>
<circle cx="119.3" cy="369.0" r="0.45" fill="#9fc2d4"/><circle cx="121.7" cy="370.0" r="0.45" fill="#9fc2d4"/><circle cx="124.1" cy="369.0" r="0.45" fill="#9fc2d4"/><circle cx="120.5" cy="371.8" r="0.45" fill="#9fc2d4"/><circle cx="122.9" cy="371.8" r="0.45" fill="#9fc2d4"/><circle cx="121.7" cy="373.8" r="0.45" fill="#9fc2d4"/>
<path d="M131.7,370.9 A5.6,5.6 0 0 1 142.9,370.9" fill="none" stroke="#f2b99a" stroke-width="1.5"/><path d="M133.2,370.9 A4.1,4.1 0 0 1 141.4,370.9" fill="none" stroke="#f0a6a0" stroke-width="1.5"/><path d="M134.6,370.9 A2.7,2.7 0 0 1 140.0,370.9" fill="none" stroke="#f6d2b0" stroke-width="1.5"/><ellipse cx="132.7" cy="371.5" rx="2.2" ry="1.2" fill="#f4e6e0"/><ellipse cx="141.9" cy="371.5" rx="2.2" ry="1.2" fill="#f4e6e0"/>
<path d="M25.3,385.5 A5.6,5.6 0 0 1 36.5,385.5" fill="none" stroke="#f2b99a" stroke-width="1.5"/><path d="M26.8,385.5 A4.1,4.1 0 0 1 35.0,385.5" fill="none" stroke="#f0a6a0" stroke-width="1.5"/><path d="M28.2,385.5 A2.7,2.7 0 0 1 33.6,385.5" fill="none" stroke="#f6d2b0" stroke-width="1.5"/><ellipse cx="26.3" cy="386.1" rx="2.2" ry="1.2" fill="#f4e6e0"/><ellipse cx="35.5" cy="386.1" rx="2.2" ry="1.2" fill="#f4e6e0"/>
<g fill="#5d727e"><ellipse cx="48.1" cy="384.8" rx="5.0" ry="1.7"/><circle cx="46.3" cy="383.6" r="2.0"/><circle cx="49.5" cy="383.0" r="2.4"/></g>
<circle cx="45.7" cy="387.6" r="0.45" fill="#9fc2d4"/><circle cx="48.1" cy="388.6" r="0.45" fill="#9fc2d4"/><circle cx="50.5" cy="387.6" r="0.45" fill="#9fc2d4"/><circle cx="46.9" cy="390.4" r="0.45" fill="#9fc2d4"/><circle cx="49.3" cy="390.4" r="0.45" fill="#9fc2d4"/><circle cx="48.1" cy="392.4" r="0.45" fill="#9fc2d4"/>
<g fill="#dba5b6"><ellipse cx="47.5" cy="378.8" rx="3.8" ry="1.3"/><circle cx="46.1" cy="377.6" r="1.5"/><circle cx="48.5" cy="377.0" r="1.8"/></g>
<g fill="#5d727e"><ellipse cx="29.9" cy="394.8" rx="5.0" ry="1.7"/><circle cx="28.1" cy="393.6" r="2.0"/><circle cx="31.3" cy="393.0" r="2.4"/></g>
<circle cx="27.5" cy="397.6" r="0.45" fill="#9fc2d4"/><circle cx="29.9" cy="398.6" r="0.45" fill="#9fc2d4"/><circle cx="32.3" cy="397.6" r="0.45" fill="#9fc2d4"/><circle cx="28.7" cy="400.4" r="0.45" fill="#9fc2d4"/><circle cx="31.1" cy="400.4" r="0.45" fill="#9fc2d4"/><circle cx="29.9" cy="402.4" r="0.45" fill="#9fc2d4"/>
<path d="M39.9,399.5 A5.6,5.6 0 0 1 51.1,399.5" fill="none" stroke="#f2b99a" stroke-width="1.5"/><path d="M41.4,399.5 A4.1,4.1 0 0 1 49.6,399.5" fill="none" stroke="#f0a6a0" stroke-width="1.5"/><path d="M42.8,399.5 A2.7,2.7 0 0 1 48.2,399.5" fill="none" stroke="#f6d2b0" stroke-width="1.5"/><ellipse cx="40.9" cy="400.1" rx="2.2" ry="1.2" fill="#f4e6e0"/><ellipse cx="50.1" cy="400.1" rx="2.2" ry="1.2" fill="#f4e6e0"/>
<path d="M55.9,385.5 A5.6,5.6 0 0 1 67.1,385.5" fill="none" stroke="#f2b99a" stroke-width="1.5"/><path d="M57.4,385.5 A4.1,4.1 0 0 1 65.6,385.5" fill="none" stroke="#f0a6a0" stroke-width="1.5"/><path d="M58.8,385.5 A2.7,2.7 0 0 1 64.2,385.5" fill="none" stroke="#f6d2b0" stroke-width="1.5"/><ellipse cx="56.9" cy="386.1" rx="2.2" ry="1.2" fill="#f4e6e0"/><ellipse cx="66.1" cy="386.1" rx="2.2" ry="1.2" fill="#f4e6e0"/>
<g fill="#5d727e"><ellipse cx="78.7" cy="384.8" rx="5.0" ry="1.7"/><circle cx="76.9" cy="383.6" r="2.0"/><circle cx="80.1" cy="383.0" r="2.4"/></g>
<circle cx="76.3" cy="387.6" r="0.45" fill="#9fc2d4"/><circle cx="78.7" cy="388.6" r="0.45" fill="#9fc2d4"/><circle cx="81.1" cy="387.6" r="0.45" fill="#9fc2d4"/><circle cx="77.5" cy="390.4" r="0.45" fill="#9fc2d4"/><circle cx="79.9" cy="390.4" r="0.45" fill="#9fc2d4"/><circle cx="78.7" cy="392.4" r="0.45" fill="#9fc2d4"/>
<g fill="#dba5b6"><ellipse cx="78.1" cy="378.8" rx="3.8" ry="1.3"/><circle cx="76.8" cy="377.6" r="1.5"/><circle cx="79.1" cy="377.0" r="1.8"/></g>
<g fill="#5d727e"><ellipse cx="60.5" cy="394.8" rx="5.0" ry="1.7"/><circle cx="58.7" cy="393.6" r="2.0"/><circle cx="61.9" cy="393.0" r="2.4"/></g>
<circle cx="58.1" cy="397.6" r="0.45" fill="#9fc2d4"/><circle cx="60.5" cy="398.6" r="0.45" fill="#9fc2d4"/><circle cx="62.9" cy="397.6" r="0.45" fill="#9fc2d4"/><circle cx="59.3" cy="400.4" r="0.45" fill="#9fc2d4"/><circle cx="61.7" cy="400.4" r="0.45" fill="#9fc2d4"/><circle cx="60.5" cy="402.4" r="0.45" fill="#9fc2d4"/>
<path d="M70.5,399.5 A5.6,5.6 0 0 1 81.7,399.5" fill="none" stroke="#f2b99a" stroke-width="1.5"/><path d="M72.0,399.5 A4.1,4.1 0 0 1 80.2,399.5" fill="none" stroke="#f0a6a0" stroke-width="1.5"/><path d="M73.4,399.5 A2.7,2.7 0 0 1 78.8,399.5" fill="none" stroke="#f6d2b0" stroke-width="1.5"/><ellipse cx="71.5" cy="400.1" rx="2.2" ry="1.2" fill="#f4e6e0"/><ellipse cx="80.7" cy="400.1" rx="2.2" ry="1.2" fill="#f4e6e0"/>
<path d="M86.5,385.5 A5.6,5.6 0 0 1 97.7,385.5" fill="none" stroke="#f2b99a" stroke-width="1.5"/><path d="M88.0,385.5 A4.1,4.1 0 0 1 96.2,385.5" fill="none" stroke="#f0a6a0" stroke-width="1.5"/><path d="M89.4,385.5 A2.7,2.7 0 0 1 94.8,385.5" fill="none" stroke="#f6d2b0" stroke-width="1.5"/><ellipse cx="87.5" cy="386.1" rx="2.2" ry="1.2" fill="#f4e6e0"/><ellipse cx="96.7" cy="386.1" rx="2.2" ry="1.2" fill="#f4e6e0"/>
<g fill="#5d727e"><ellipse cx="109.3" cy="384.8" rx="5.0" ry="1.7"/><circle cx="107.5" cy="383.6" r="2.0"/><circle cx="110.7" cy="383.0" r="2.4"/></g>
<circle cx="106.9" cy="387.6" r="0.45" fill="#9fc2d4"/><circle cx="109.3" cy="388.6" r="0.45" fill="#9fc2d4"/><circle cx="111.7" cy="387.6" r="0.45" fill="#9fc2d4"/><circle cx="108.1" cy="390.4" r="0.45" fill="#9fc2d4"/><circle cx="110.5" cy="390.4" r="0.45" fill="#9fc2d4"/><circle cx="109.3" cy="392.4" r="0.45" fill="#9fc2d4"/>
<g fill="#dba5b6"><ellipse cx="108.7" cy="378.8" rx="3.8" ry="1.3"/><circle cx="107.3" cy="377.6" r="1.5"/><circle cx="109.7" cy="377.0" r="1.8"/></g>
<g fill="#5d727e"><ellipse cx="91.1" cy="394.8" rx="5.0" ry="1.7"/><circle cx="89.3" cy="393.6" r="2.0"/><circle cx="92.5" cy="393.0" r="2.4"/></g>
<circle cx="88.7" cy="397.6" r="0.45" fill="#9fc2d4"/><circle cx="91.1" cy="398.6" r="0.45" fill="#9fc2d4"/><circle cx="93.5" cy="397.6" r="0.45" fill="#9fc2d4"/><circle cx="89.9" cy="400.4" r="0.45" fill="#9fc2d4"/><circle cx="92.3" cy="400.4" r="0.45" fill="#9fc2d4"/><circle cx="91.1" cy="402.4" r="0.45" fill="#9fc2d4"/>
<path d="M101.1,399.5 A5.6,5.6 0 0 1 112.3,399.5" fill="none" stroke="#f2b99a" stroke-width="1.5"/><path d="M102.6,399.5 A4.1,4.1 0 0 1 110.8,399.5" fill="none" stroke="#f0a6a0" stroke-width="1.5"/><path d="M104.0,399.5 A2.7,2.7 0 0 1 109.4,399.5" fill="none" stroke="#f6d2b0" stroke-width="1.5"/><ellipse cx="102.1" cy="400.1" rx="2.2" ry="1.2" fill="#f4e6e0"/><ellipse cx="111.3" cy="400.1" rx="2.2" ry="1.2" fill="#f4e6e0"/>
<path d="M117.1,385.5 A5.6,5.6 0 0 1 128.3,385.5" fill="none" stroke="#f2b99a" stroke-width="1.5"/><path d="M118.6,385.5 A4.1,4.1 0 0 1 126.8,385.5" fill="none" stroke="#f0a6a0" stroke-width="1.5"/><path d="M120.0,385.5 A2.7,2.7 0 0 1 125.4,385.5" fill="none" stroke="#f6d2b0" stroke-width="1.5"/><ellipse cx="118.1" cy="386.1" rx="2.2" ry="1.2" fill="#f4e6e0"/><ellipse cx="127.3" cy="386.1" rx="2.2" ry="1.2" fill="#f4e6e0"/>
<g fill="#5d727e"><ellipse cx="139.9" cy="384.8" rx="5.0" ry="1.7"/><circle cx="138.1" cy="383.6" r="2.0"/><circle cx="141.3" cy="383.0" r="2.4"/></g>
<circle cx="137.5" cy="387.6" r="0.45" fill="#9fc2d4"/><circle cx="139.9" cy="388.6" r="0.45" fill="#9fc2d4"/><circle cx="142.3" cy="387.6" r="0.45" fill="#9fc2d4"/><circle cx="138.7" cy="390.4" r="0.45" fill="#9fc2d4"/><circle cx="141.1" cy="390.4" r="0.45" fill="#9fc2d4"/><circle cx="139.9" cy="392.4" r="0.45" fill="#9fc2d4"/>
<g fill="#dba5b6"><ellipse cx="139.3" cy="378.8" rx="3.8" ry="1.3"/><circle cx="138.0" cy="377.6" r="1.5"/><circle cx="140.4" cy="377.0" r="1.8"/></g>
<g fill="#5d727e"><ellipse cx="121.7" cy="394.8" rx="5.0" ry="1.7"/><circle cx="119.9" cy="393.6" r="2.0"/><circle cx="123.1" cy="393.0" r="2.4"/></g>
<circle cx="119.3" cy="397.6" r="0.45" fill="#9fc2d4"/><circle cx="121.7" cy="398.6" r="0.45" fill="#9fc2d4"/><circle cx="124.1" cy="397.6" r="0.45" fill="#9fc2d4"/><circle cx="120.5" cy="400.4" r="0.45" fill="#9fc2d4"/><circle cx="122.9" cy="400.4" r="0.45" fill="#9fc2d4"/><circle cx="121.7" cy="402.4" r="0.45" fill="#9fc2d4"/>
<path d="M131.7,399.5 A5.6,5.6 0 0 1 142.9,399.5" fill="none" stroke="#f2b99a" stroke-width="1.5"/><path d="M133.2,399.5 A4.1,4.1 0 0 1 141.4,399.5" fill="none" stroke="#f0a6a0" stroke-width="1.5"/><path d="M134.6,399.5 A2.7,2.7 0 0 1 140.0,399.5" fill="none" stroke="#f6d2b0" stroke-width="1.5"/><ellipse cx="132.7" cy="400.1" rx="2.2" ry="1.2" fill="#f4e6e0"/><ellipse cx="141.9" cy="400.1" rx="2.2" ry="1.2" fill="#f4e6e0"/>
<path d="M25.3,414.1 A5.6,5.6 0 0 1 36.5,414.1" fill="none" stroke="#f2b99a" stroke-width="1.5"/><path d="M26.8,414.1 A4.1,4.1 0 0 1 35.0,414.1" fill="none" stroke="#f0a6a0" stroke-width="1.5"/><path d="M28.2,414.1 A2.7,2.7 0 0 1 33.6,414.1" fill="none" stroke="#f6d2b0" stroke-width="1.5"/><ellipse cx="26.3" cy="414.7" rx="2.2" ry="1.2" fill="#f4e6e0"/><ellipse cx="35.5" cy="414.7" rx="2.2" ry="1.2" fill="#f4e6e0"/>
<g fill="#5d727e"><ellipse cx="48.1" cy="413.4" rx="5.0" ry="1.7"/><circle cx="46.3" cy="412.2" r="2.0"/><circle cx="49.5" cy="411.6" r="2.4"/></g>
<circle cx="45.7" cy="416.2" r="0.45" fill="#9fc2d4"/><circle cx="48.1" cy="417.2" r="0.45" fill="#9fc2d4"/><circle cx="50.5" cy="416.2" r="0.45" fill="#9fc2d4"/><circle cx="46.9" cy="419.0" r="0.45" fill="#9fc2d4"/><circle cx="49.3" cy="419.0" r="0.45" fill="#9fc2d4"/><circle cx="48.1" cy="421.0" r="0.45" fill="#9fc2d4"/>
<g fill="#dba5b6"><ellipse cx="47.5" cy="407.4" rx="3.8" ry="1.3"/><circle cx="46.1" cy="406.2" r="1.5"/><circle cx="48.5" cy="405.6" r="1.8"/></g>
<g fill="#5d727e"><ellipse cx="29.9" cy="423.4" rx="5.0" ry="1.7"/><circle cx="28.1" cy="422.2" r="2.0"/><circle cx="31.3" cy="421.6" r="2.4"/></g>
<circle cx="27.5" cy="426.2" r="0.45" fill="#9fc2d4"/><circle cx="29.9" cy="427.2" r="0.45" fill="#9fc2d4"/><circle cx="32.3" cy="426.2" r="0.45" fill="#9fc2d4"/><circle cx="28.7" cy="429.0" r="0.45" fill="#9fc2d4"/><circle cx="31.1" cy="429.0" r="0.45" fill="#9fc2d4"/><circle cx="29.9" cy="431.0" r="0.45" fill="#9fc2d4"/>
<path d="M39.9,428.1 A5.6,5.6 0 0 1 51.1,428.1" fill="none" stroke="#f2b99a" stroke-width="1.5"/><path d="M41.4,428.1 A4.1,4.1 0 0 1 49.6,428.1" fill="none" stroke="#f0a6a0" stroke-width="1.5"/><path d="M42.8,428.1 A2.7,2.7 0 0 1 48.2,428.1" fill="none" stroke="#f6d2b0" stroke-width="1.5"/><ellipse cx="40.9" cy="428.7" rx="2.2" ry="1.2" fill="#f4e6e0"/><ellipse cx="50.1" cy="428.7" rx="2.2" ry="1.2" fill="#f4e6e0"/>
<path d="M55.9,414.1 A5.6,5.6 0 0 1 67.1,414.1" fill="none" stroke="#f2b99a" stroke-width="1.5"/><path d="M57.4,414.1 A4.1,4.1 0 0 1 65.6,414.1" fill="none" stroke="#f0a6a0" stroke-width="1.5"/><path d="M58.8,414.1 A2.7,2.7 0 0 1 64.2,414.1" fill="none" stroke="#f6d2b0" stroke-width="1.5"/><ellipse cx="56.9" cy="414.7" rx="2.2" ry="1.2" fill="#f4e6e0"/><ellipse cx="66.1" cy="414.7" rx="2.2" ry="1.2" fill="#f4e6e0"/>
<g fill="#5d727e"><ellipse cx="78.7" cy="413.4" rx="5.0" ry="1.7"/><circle cx="76.9" cy="412.2" r="2.0"/><circle cx="80.1" cy="411.6" r="2.4"/></g>
<circle cx="76.3" cy="416.2" r="0.45" fill="#9fc2d4"/><circle cx="78.7" cy="417.2" r="0.45" fill="#9fc2d4"/><circle cx="81.1" cy="416.2" r="0.45" fill="#9fc2d4"/><circle cx="77.5" cy="419.0" r="0.45" fill="#9fc2d4"/><circle cx="79.9" cy="419.0" r="0.45" fill="#9fc2d4"/><circle cx="78.7" cy="421.0" r="0.45" fill="#9fc2d4"/>
<g fill="#dba5b6"><ellipse cx="78.1" cy="407.4" rx="3.8" ry="1.3"/><circle cx="76.8" cy="406.2" r="1.5"/><circle cx="79.1" cy="405.6" r="1.8"/></g>
<g fill="#5d727e"><ellipse cx="60.5" cy="423.4" rx="5.0" ry="1.7"/><circle cx="58.7" cy="422.2" r="2.0"/><circle cx="61.9" cy="421.6" r="2.4"/></g>
<circle cx="58.1" cy="426.2" r="0.45" fill="#9fc2d4"/><circle cx="60.5" cy="427.2" r="0.45" fill="#9fc2d4"/><circle cx="62.9" cy="426.2" r="0.45" fill="#9fc2d4"/><circle cx="59.3" cy="429.0" r="0.45" fill="#9fc2d4"/><circle cx="61.7" cy="429.0" r="0.45" fill="#9fc2d4"/><circle cx="60.5" cy="431.0" r="0.45" fill="#9fc2d4"/>
<path d="M70.5,428.1 A5.6,5.6 0 0 1 81.7,428.1" fill="none" stroke="#f2b99a" stroke-width="1.5"/><path d="M72.0,428.1 A4.1,4.1 0 0 1 80.2,428.1" fill="none" stroke="#f0a6a0" stroke-width="1.5"/><path d="M73.4,428.1 A2.7,2.7 0 0 1 78.8,428.1" fill="none" stroke="#f6d2b0" stroke-width="1.5"/><ellipse cx="71.5" cy="428.7" rx="2.2" ry="1.2" fill="#f4e6e0"/><ellipse cx="80.7" cy="428.7" rx="2.2" ry="1.2" fill="#f4e6e0"/>
<path d="M86.5,414.1 A5.6,5.6 0 0 1 97.7,414.1" fill="none" stroke="#f2b99a" stroke-width="1.5"/><path d="M88.0,414.1 A4.1,4.1 0 0 1 96.2,414.1" fill="none" stroke="#f0a6a0" stroke-width="1.5"/><path d="M89.4,414.1 A2.7,2.7 0 0 1 94.8,414.1" fill="none" stroke="#f6d2b0" stroke-width="1.5"/><ellipse cx="87.5" cy="414.7" rx="2.2" ry="1.2" fill="#f4e6e0"/><ellipse cx="96.7" cy="414.7" rx="2.2" ry="1.2" fill="#f4e6e0"/>
<g fill="#5d727e"><ellipse cx="109.3" cy="413.4" rx="5.0" ry="1.7"/><circle cx="107.5" cy="412.2" r="2.0"/><circle cx="110.7" cy="411.6" r="2.4"/></g>
<circle cx="106.9" cy="416.2" r="0.45" fill="#9fc2d4"/><circle cx="109.3" cy="417.2" r="0.45" fill="#9fc2d4"/><circle cx="111.7" cy="416.2" r="0.45" fill="#9fc2d4"/><circle cx="108.1" cy="419.0" r="0.45" fill="#9fc2d4"/><circle cx="110.5" cy="419.0" r="0.45" fill="#9fc2d4"/><circle cx="109.3" cy="421.0" r="0.45" fill="#9fc2d4"/>
<g fill="#dba5b6"><ellipse cx="108.7" cy="407.4" rx="3.8" ry="1.3"/><circle cx="107.3" cy="406.2" r="1.5"/><circle cx="109.7" cy="405.6" r="1.8"/></g>
<g fill="#5d727e"><ellipse cx="91.1" cy="423.4" rx="5.0" ry="1.7"/><circle cx="89.3" cy="422.2" r="2.0"/><circle cx="92.5" cy="421.6" r="2.4"/></g>
<circle cx="88.7" cy="426.2" r="0.45" fill="#9fc2d4"/><circle cx="91.1" cy="427.2" r="0.45" fill="#9fc2d4"/><circle cx="93.5" cy="426.2" r="0.45" fill="#9fc2d4"/><circle cx="89.9" cy="429.0" r="0.45" fill="#9fc2d4"/><circle cx="92.3" cy="429.0" r="0.45" fill="#9fc2d4"/><circle cx="91.1" cy="431.0" r="0.45" fill="#9fc2d4"/>
<path d="M101.1,428.1 A5.6,5.6 0 0 1 112.3,428.1" fill="none" stroke="#f2b99a" stroke-width="1.5"/><path d="M102.6,428.1 A4.1,4.1 0 0 1 110.8,428.1" fill="none" stroke="#f0a6a0" stroke-width="1.5"/><path d="M104.0,428.1 A2.7,2.7 0 0 1 109.4,428.1" fill="none" stroke="#f6d2b0" stroke-width="1.5"/><ellipse cx="102.1" cy="428.7" rx="2.2" ry="1.2" fill="#f4e6e0"/><ellipse cx="111.3" cy="428.7" rx="2.2" ry="1.2" fill="#f4e6e0"/>
<path d="M117.1,414.1 A5.6,5.6 0 0 1 128.3,414.1" fill="none" stroke="#f2b99a" stroke-width="1.5"/><path d="M118.6,414.1 A4.1,4.1 0 0 1 126.8,414.1" fill="none" stroke="#f0a6a0" stroke-width="1.5"/><path d="M120.0,414.1 A2.7,2.7 0 0 1 125.4,414.1" fill="none" stroke="#f6d2b0" stroke-width="1.5"/><ellipse cx="118.1" cy="414.7" rx="2.2" ry="1.2" fill="#f4e6e0"/><ellipse cx="127.3" cy="414.7" rx="2.2" ry="1.2" fill="#f4e6e0"/>
<g fill="#5d727e"><ellipse cx="139.9" cy="413.4" rx="5.0" ry="1.7"/><circle cx="138.1" cy="412.2" r="2.0"/><circle cx="141.3" cy="411.6" r="2.4"/></g>
<circle cx="137.5" cy="416.2" r="0.45" fill="#9fc2d4"/><circle cx="139.9" cy="417.2" r="0.45" fill="#9fc2d4"/><circle cx="142.3" cy="416.2" r="0.45" fill="#9fc2d4"/><circle cx="138.7" cy="419.0" r="0.45" fill="#9fc2d4"/><circle cx="141.1" cy="419.0" r="0.45" fill="#9fc2d4"/><circle cx="139.9" cy="421.0" r="0.45" fill="#9fc2d4"/>
<g fill="#dba5b6"><ellipse cx="139.3" cy="407.4" rx="3.8" ry="1.3"/><circle cx="138.0" cy="406.2" r="1.5"/><circle cx="140.4" cy="405.6" r="1.8"/></g>
<g fill="#5d727e"><ellipse cx="121.7" cy="423.4" rx="5.0" ry="1.7"/><circle cx="119.9" cy="422.2" r="2.0"/><circle cx="123.1" cy="421.6" r="2.4"/></g>
<circle cx="119.3" cy="426.2" r="0.45" fill="#9fc2d4"/><circle cx="121.7" cy="427.2" r="0.45" fill="#9fc2d4"/><circle cx="124.1" cy="426.2" r="0.45" fill="#9fc2d4"/><circle cx="120.5" cy="429.0" r="0.45" fill="#9fc2d4"/><circle cx="122.9" cy="429.0" r="0.45" fill="#9fc2d4"/><circle cx="121.7" cy="431.0" r="0.45" fill="#9fc2d4"/>
<path d="M131.7,428.1 A5.6,5.6 0 0 1 142.9,428.1" fill="none" stroke="#f2b99a" stroke-width="1.5"/><path d="M133.2,428.1 A4.1,4.1 0 0 1 141.4,428.1" fill="none" stroke="#f0a6a0" stroke-width="1.5"/><path d="M134.6,428.1 A2.7,2.7 0 0 1 140.0,428.1" fill="none" stroke="#f6d2b0" stroke-width="1.5"/><ellipse cx="132.7" cy="428.7" rx="2.2" ry="1.2" fill="#f4e6e0"/><ellipse cx="141.9" cy="428.7" rx="2.2" ry="1.2" fill="#f4e6e0"/>
<path d="M25.3,442.7 A5.6,5.6 0 0 1 36.5,442.7" fill="none" stroke="#f2b99a" stroke-width="1.5"/><path d="M26.8,442.7 A4.1,4.1 0 0 1 35.0,442.7" fill="none" stroke="#f0a6a0" stroke-width="1.5"/><path d="M28.2,442.7 A2.7,2.7 0 0 1 33.6,442.7" fill="none" stroke="#f6d2b0" stroke-width="1.5"/><ellipse cx="26.3" cy="443.3" rx="2.2" ry="1.2" fill="#f4e6e0"/><ellipse cx="35.5" cy="443.3" rx="2.2" ry="1.2" fill="#f4e6e0"/>
<g fill="#5d727e"><ellipse cx="48.1" cy="442.0" rx="5.0" ry="1.7"/><circle cx="46.3" cy="440.8" r="2.0"/><circle cx="49.5" cy="440.2" r="2.4"/></g>
<circle cx="45.7" cy="444.8" r="0.45" fill="#9fc2d4"/><circle cx="48.1" cy="445.8" r="0.45" fill="#9fc2d4"/><circle cx="50.5" cy="444.8" r="0.45" fill="#9fc2d4"/><circle cx="46.9" cy="447.6" r="0.45" fill="#9fc2d4"/><circle cx="49.3" cy="447.6" r="0.45" fill="#9fc2d4"/><circle cx="48.1" cy="449.6" r="0.45" fill="#9fc2d4"/>
<g fill="#dba5b6"><ellipse cx="47.5" cy="436.0" rx="3.8" ry="1.3"/><circle cx="46.1" cy="434.8" r="1.5"/><circle cx="48.5" cy="434.2" r="1.8"/></g>
<g fill="#5d727e"><ellipse cx="29.9" cy="452.0" rx="5.0" ry="1.7"/><circle cx="28.1" cy="450.8" r="2.0"/><circle cx="31.3" cy="450.2" r="2.4"/></g>
<circle cx="27.5" cy="454.8" r="0.45" fill="#9fc2d4"/><circle cx="29.9" cy="455.8" r="0.45" fill="#9fc2d4"/><circle cx="32.3" cy="454.8" r="0.45" fill="#9fc2d4"/><circle cx="28.7" cy="457.6" r="0.45" fill="#9fc2d4"/><circle cx="31.1" cy="457.6" r="0.45" fill="#9fc2d4"/><circle cx="29.9" cy="459.6" r="0.45" fill="#9fc2d4"/>
<path d="M39.9,456.7 A5.6,5.6 0 0 1 51.1,456.7" fill="none" stroke="#f2b99a" stroke-width="1.5"/><path d="M41.4,456.7 A4.1,4.1 0 0 1 49.6,456.7" fill="none" stroke="#f0a6a0" stroke-width="1.5"/><path d="M42.8,456.7 A2.7,2.7 0 0 1 48.2,456.7" fill="none" stroke="#f6d2b0" stroke-width="1.5"/><ellipse cx="40.9" cy="457.3" rx="2.2" ry="1.2" fill="#f4e6e0"/><ellipse cx="50.1" cy="457.3" rx="2.2" ry="1.2" fill="#f4e6e0"/>
<path d="M55.9,442.7 A5.6,5.6 0 0 1 67.1,442.7" fill="none" stroke="#f2b99a" stroke-width="1.5"/><path d="M57.4,442.7 A4.1,4.1 0 0 1 65.6,442.7" fill="none" stroke="#f0a6a0" stroke-width="1.5"/><path d="M58.8,442.7 A2.7,2.7 0 0 1 64.2,442.7" fill="none" stroke="#f6d2b0" stroke-width="1.5"/><ellipse cx="56.9" cy="443.3" rx="2.2" ry="1.2" fill="#f4e6e0"/><ellipse cx="66.1" cy="443.3" rx="2.2" ry="1.2" fill="#f4e6e0"/>
<g fill="#5d727e"><ellipse cx="78.7" cy="442.0" rx="5.0" ry="1.7"/><circle cx="76.9" cy="440.8" r="2.0"/><circle cx="80.1" cy="440.2" r="2.4"/></g>
<circle cx="76.3" cy="444.8" r="0.45" fill="#9fc2d4"/><circle cx="78.7" cy="445.8" r="0.45" fill="#9fc2d4"/><circle cx="81.1" cy="444.8" r="0.45" fill="#9fc2d4"/><circle cx="77.5" cy="447.6" r="0.45" fill="#9fc2d4"/><circle cx="79.9" cy="447.6" r="0.45" fill="#9fc2d4"/><circle cx="78.7" cy="449.6" r="0.45" fill="#9fc2d4"/>
<g fill="#dba5b6"><ellipse cx="78.1" cy="436.0" rx="3.8" ry="1.3"/><circle cx="76.8" cy="434.8" r="1.5"/><circle cx="79.1" cy="434.2" r="1.8"/></g>
<g fill="#5d727e"><ellipse cx="60.5" cy="452.0" rx="5.0" ry="1.7"/><circle cx="58.7" cy="450.8" r="2.0"/><circle cx="61.9" cy="450.2" r="2.4"/></g>
<circle cx="58.1" cy="454.8" r="0.45" fill="#9fc2d4"/><circle cx="60.5" cy="455.8" r="0.45" fill="#9fc2d4"/><circle cx="62.9" cy="454.8" r="0.45" fill="#9fc2d4"/><circle cx="59.3" cy="457.6" r="0.45" fill="#9fc2d4"/><circle cx="61.7" cy="457.6" r="0.45" fill="#9fc2d4"/><circle cx="60.5" cy="459.6" r="0.45" fill="#9fc2d4"/>
<path d="M70.5,456.7 A5.6,5.6 0 0 1 81.7,456.7" fill="none" stroke="#f2b99a" stroke-width="1.5"/><path d="M72.0,456.7 A4.1,4.1 0 0 1 80.2,456.7" fill="none" stroke="#f0a6a0" stroke-width="1.5"/><path d="M73.4,456.7 A2.7,2.7 0 0 1 78.8,456.7" fill="none" stroke="#f6d2b0" stroke-width="1.5"/><ellipse cx="71.5" cy="457.3" rx="2.2" ry="1.2" fill="#f4e6e0"/><ellipse cx="80.7" cy="457.3" rx="2.2" ry="1.2" fill="#f4e6e0"/>
<path d="M86.5,442.7 A5.6,5.6 0 0 1 97.7,442.7" fill="none" stroke="#f2b99a" stroke-width="1.5"/><path d="M88.0,442.7 A4.1,4.1 0 0 1 96.2,442.7" fill="none" stroke="#f0a6a0" stroke-width="1.5"/><path d="M89.4,442.7 A2.7,2.7 0 0 1 94.8,442.7" fill="none" stroke="#f6d2b0" stroke-width="1.5"/><ellipse cx="87.5" cy="443.3" rx="2.2" ry="1.2" fill="#f4e6e0"/><ellipse cx="96.7" cy="443.3" rx="2.2" ry="1.2" fill="#f4e6e0"/>
<g fill="#5d727e"><ellipse cx="109.3" cy="442.0" rx="5.0" ry="1.7"/><circle cx="107.5" cy="440.8" r="2.0"/><circle cx="110.7" cy="440.2" r="2.4"/></g>
<circle cx="106.9" cy="444.8" r="0.45" fill="#9fc2d4"/><circle cx="109.3" cy="445.8" r="0.45" fill="#9fc2d4"/><circle cx="111.7" cy="444.8" r="0.45" fill="#9fc2d4"/><circle cx="108.1" cy="447.6" r="0.45" fill="#9fc2d4"/><circle cx="110.5" cy="447.6" r="0.45" fill="#9fc2d4"/><circle cx="109.3" cy="449.6" r="0.45" fill="#9fc2d4"/>
<g fill="#dba5b6"><ellipse cx="108.7" cy="436.0" rx="3.8" ry="1.3"/><circle cx="107.3" cy="434.8" r="1.5"/><circle cx="109.7" cy="434.2" r="1.8"/></g>
<g fill="#5d727e"><ellipse cx="91.1" cy="452.0" rx="5.0" ry="1.7"/><circle cx="89.3" cy="450.8" r="2.0"/><circle cx="92.5" cy="450.2" r="2.4"/></g>
<circle cx="88.7" cy="454.8" r="0.45" fill="#9fc2d4"/><circle cx="91.1" cy="455.8" r="0.45" fill="#9fc2d4"/><circle cx="93.5" cy="454.8" r="0.45" fill="#9fc2d4"/><circle cx="89.9" cy="457.6" r="0.45" fill="#9fc2d4"/><circle cx="92.3" cy="457.6" r="0.45" fill="#9fc2d4"/><circle cx="91.1" cy="459.6" r="0.45" fill="#9fc2d4"/>
<path d="M101.1,456.7 A5.6,5.6 0 0 1 112.3,456.7" fill="none" stroke="#f2b99a" stroke-width="1.5"/><path d="M102.6,456.7 A4.1,4.1 0 0 1 110.8,456.7" fill="none" stroke="#f0a6a0" stroke-width="1.5"/><path d="M104.0,456.7 A2.7,2.7 0 0 1 109.4,456.7" fill="none" stroke="#f6d2b0" stroke-width="1.5"/><ellipse cx="102.1" cy="457.3" rx="2.2" ry="1.2" fill="#f4e6e0"/><ellipse cx="111.3" cy="457.3" rx="2.2" ry="1.2" fill="#f4e6e0"/>
<path d="M117.1,442.7 A5.6,5.6 0 0 1 128.3,442.7" fill="none" stroke="#f2b99a" stroke-width="1.5"/><path d="M118.6,442.7 A4.1,4.1 0 0 1 126.8,442.7" fill="none" stroke="#f0a6a0" stroke-width="1.5"/><path d="M120.0,442.7 A2.7,2.7 0 0 1 125.4,442.7" fill="none" stroke="#f6d2b0" stroke-width="1.5"/><ellipse cx="118.1" cy="443.3" rx="2.2" ry="1.2" fill="#f4e6e0"/><ellipse cx="127.3" cy="443.3" rx="2.2" ry="1.2" fill="#f4e6e0"/>
<g fill="#5d727e"><ellipse cx="139.9" cy="442.0" rx="5.0" ry="1.7"/><circle cx="138.1" cy="440.8" r="2.0"/><circle cx="141.3" cy="440.2" r="2.4"/></g>
<circle cx="137.5" cy="444.8" r="0.45" fill="#9fc2d4"/><circle cx="139.9" cy="445.8" r="0.45" fill="#9fc2d4"/><circle cx="142.3" cy="444.8" r="0.45" fill="#9fc2d4"/><circle cx="138.7" cy="447.6" r="0.45" fill="#9fc2d4"/><circle cx="141.1" cy="447.6" r="0.45" fill="#9fc2d4"/><circle cx="139.9" cy="449.6" r="0.45" fill="#9fc2d4"/>
<g fill="#dba5b6"><ellipse cx="139.3" cy="436.0" rx="3.8" ry="1.3"/><circle cx="138.0" cy="434.8" r="1.5"/><circle cx="140.4" cy="434.2" r="1.8"/></g>
<g fill="#5d727e"><ellipse cx="121.7" cy="452.0" rx="5.0" ry="1.7"/><circle cx="119.9" cy="450.8" r="2.0"/><circle cx="123.1" cy="450.2" r="2.4"/></g>
<circle cx="119.3" cy="454.8" r="0.45" fill="#9fc2d4"/><circle cx="121.7" cy="455.8" r="0.45" fill="#9fc2d4"/><circle cx="124.1" cy="454.8" r="0.45" fill="#9fc2d4"/><circle cx="120.5" cy="457.6" r="0.45" fill="#9fc2d4"/><circle cx="122.9" cy="457.6" r="0.45" fill="#9fc2d4"/><circle cx="121.7" cy="459.6" r="0.45" fill="#9fc2d4"/>
<path d="M131.7,456.7 A5.6,5.6 0 0 1 142.9,456.7" fill="none" stroke="#f2b99a" stroke-width="1.5"/><path d="M133.2,456.7 A4.1,4.1 0 0 1 141.4,456.7" fill="none" stroke="#f0a6a0" stroke-width="1.5"/><path d="M134.6,456.7 A2.7,2.7 0 0 1 140.0,456.7" fill="none" stroke="#f6d2b0" stroke-width="1.5"/><ellipse cx="132.7" cy="457.3" rx="2.2" ry="1.2" fill="#f4e6e0"/><ellipse cx="141.9" cy="457.3" rx="2.2" ry="1.2" fill="#f4e6e0"/>
<use href="#crown" x="104.4" y="426.4" width="9" height="9"/>
</g>
<g clip-path="url(#cb1)"><rect x="118" y="377" width="61" height="60" fill="#2f56e2"/>
<g>
<circle cx="141" cy="396" r="3.2" fill="#f0609a"/>
<circle cx="146.5" cy="392.5" r="3.6" fill="#b98ae6"/>
<circle cx="153.5" cy="394.5" r="3.2" fill="#e43a22"/>
<circle cx="159" cy="398.5" r="3.4" fill="#c08ae8"/>
<circle cx="137.5" cy="403" r="2.8" fill="#b04ad0"/>
<circle cx="144" cy="401" r="3" fill="#3a2a6a"/>
<circle cx="150.5" cy="402.5" r="3.4" fill="#f0709a"/>
<circle cx="156.5" cy="405" r="2.6" fill="#2a7a5c"/>
<circle cx="141" cy="407.5" r="2.6" fill="#1e7a60"/>
<circle cx="147.5" cy="408" r="2.8" fill="#e84a7a"/>
<circle cx="153" cy="409.5" r="2.4" fill="#3a2a6a"/>
<circle cx="134" cy="399.5" r="1.8" fill="#e8eef8"/>
<circle cx="162" cy="404" r="2" fill="#1e8a66"/>
<circle cx="133.5" cy="406.5" r="2" fill="#1e8a66"/>
<circle cx="149.5" cy="397" r="2.4" fill="#5a3aa0"/>
<circle cx="145" cy="411.5" r="2" fill="#e43a22"/>
<circle cx="157.5" cy="411" r="2" fill="#1e7a60"/>
<circle cx="153.5" cy="394.5" r="1.2" fill="#f6b23a"/><circle cx="141" cy="396" r="1.1" fill="#f9d0e0"/><circle cx="137.5" cy="403" r="1" fill="#f6d6f6"/><circle cx="150.5" cy="402.5" r="1.1" fill="#fbd6e2"/>
</g>
<path d="M135.8,412.6 L162.2,412.6 L162.2,425.6 L135.8,425.6 Z" fill="#f6f6f4"/><path d="M135.8,412.6 L149,420.5 L162.2,412.6" fill="none" stroke="#e2e2de" stroke-width="0.6"/>
<path d="M142,412.6 C144,415 146,416 148,418 C149,414.5 151,413.5 155,412.6 Z" fill="#1e7a60"/><circle cx="145.6" cy="414" r="1.4" fill="#e43a22"/><circle cx="151.8" cy="414.4" r="1.2" fill="#3a2a6a"/>
<use href="#crown" x="167.4" y="425.4" width="9" height="9"/>
</g>
<g clip-path="url(#cb2)"><rect x="183" y="377" width="30" height="60" fill="#5ec4cc"/><rect x="183" y="421.5" width="30" height="16" fill="#e9e9e9"/>
<path d="M183,421.8 L183,415 L187,411 L190,415 L193.5,409 L197,414.5 L200,407.5 L203.5,413 L206,409.5 L206,421.8 Z" fill="#f4f6f8"/>
<rect x="188.4" y="417" width="5" height="4.6" fill="#e58fb0"/><rect x="195.6" y="416.6" width="4.4" height="5" fill="#f0b04a"/><rect x="201.4" y="416.2" width="4.6" height="5.4" fill="#e0785a"/><rect x="184" y="418" width="3.4" height="3.6" fill="#f2c0c8"/>
<g fill="#fff" opacity="0.8"><circle cx="188" cy="386" r="0.4"/><circle cx="196" cy="392" r="0.4"/><circle cx="202" cy="383" r="0.4"/><circle cx="192" cy="401" r="0.4"/><circle cx="203" cy="399" r="0.4"/></g>
</g>
<pattern id="dots" width="1.5" height="1.5" patternUnits="userSpaceOnUse" patternTransform="rotate(45)"><circle cx="0.75" cy="0.75" r="0.38" fill="#fff" opacity="0.55"/></pattern>
<g clip-path="url(#cd0)"><rect x="53" y="460" width="62" height="60" fill="#f8f8f8"/>
<rect x="54" y="472.2" width="26" height="35.4" rx="2.2" fill="#f57c7e"/><rect x="54" y="472.2" width="26" height="35.4" rx="2.2" fill="url(#dots)"/>
<path d="M67,485.8 L71,489.9 L67,494 L63,489.9 Z" fill="#f8a2a2"/>
<rect x="86.2" y="472.2" width="26" height="35.4" rx="2.2" fill="#5b58a6"/><rect x="86.2" y="472.2" width="26" height="35.4" rx="2.2" fill="url(#dots)"/>
<path d="M99.2,485.8 L103.2,489.9 L99.2,494 L95.2,489.9 Z" fill="#8a88c8"/>
<use href="#crown" x="101.8" y="508" width="8.4" height="8.4"/>
</g>
<g clip-path="url(#cd1)"><rect x="118" y="460" width="61" height="60" fill="#f8f8f8"/>
<path d="M140,462.5 L158,461 L170,505 L150,510 Z" fill="#fff" stroke="#333" stroke-width="0.55" stroke-linejoin="round"/>
<path d="M143,464.5 L162,465 L172,507 L152,511 Z" fill="#fff" stroke="#333" stroke-width="0.55" stroke-linejoin="round"/>
<path d="M146,467 L166,469 L173,509 L153,512 Z" fill="#fff" stroke="#333" stroke-width="0.55" stroke-linejoin="round"/>
<path d="M122.5,471.5 L141,469 L152,511 L133,514.5 Z" fill="#fff" stroke="#333" stroke-width="0.55" stroke-linejoin="round"/>
<path d="M127.5,471 L146,469.2 L154,511.5 L135,514.4 Z" fill="#fff" stroke="#333" stroke-width="0.55" stroke-linejoin="round"/>
<path d="M132,470.8 L150,469.6 L156,512 L137,514.4 Z" fill="#fff" stroke="#333" stroke-width="0.55" stroke-linejoin="round"/>
<path d="M136.5,470.8 L154,470 L158,512.4 L139,514.4 Z" fill="#fff" stroke="#333" stroke-width="0.55" stroke-linejoin="round"/>
<path d="M145.6,471.6 L171,475.6 L165.6,518 L134.6,513.6 Z" fill="#fff" stroke="#333" stroke-width="0.55" stroke-linejoin="round"/>
<path d="M147.6,475.4 L167.8,478.6 L163.6,513.8 L138.4,510.2 Z" fill="none" stroke="#333" stroke-width="0.45"/>
<g font-family="'Liberation Sans',sans-serif" font-size="3.6" font-weight="bold" fill="#222">
<text x="123.4" y="475.6" textLength="2.4" lengthAdjust="spacingAndGlyphs">1</text>
<text x="128.3" y="475.2" textLength="2.4" lengthAdjust="spacingAndGlyphs">J</text>
<text x="132.4" y="474.9" textLength="2.4" lengthAdjust="spacingAndGlyphs">Q</text>
<text x="136.9" y="474.8" textLength="2.4" lengthAdjust="spacingAndGlyphs">K</text>
<text x="141.6" y="475.2" textLength="2.4" lengthAdjust="spacingAndGlyphs">A</text>
</g>
<path transform="translate(124.8,478.2) scale(1.25)" d="M0,-1 C0.2,-0.5 1,-0.1 1,0.45 C1,0.9 0.4,1.05 0.1,0.7 C0.15,1 0.3,1.2 0.5,1.3 L-0.5,1.3 C-0.3,1.2 -0.15,1 -0.1,0.7 C-0.4,1.05 -1,0.9 -1,0.45 C-1,-0.1 -0.2,-0.5 0,-1 Z" fill="#111"/>
<path transform="translate(129.4,478.2) scale(1.25)" d="M0,-1 C0.2,-0.5 1,-0.1 1,0.45 C1,0.9 0.4,1.05 0.1,0.7 C0.15,1 0.3,1.2 0.5,1.3 L-0.5,1.3 C-0.3,1.2 -0.15,1 -0.1,0.7 C-0.4,1.05 -1,0.9 -1,0.45 C-1,-0.1 -0.2,-0.5 0,-1 Z" fill="#111"/>
<path transform="translate(133.8,478.2) scale(1.25)" d="M0,-1 C0.2,-0.5 1,-0.1 1,0.45 C1,0.9 0.4,1.05 0.1,0.7 C0.15,1 0.3,1.2 0.5,1.3 L-0.5,1.3 C-0.3,1.2 -0.15,1 -0.1,0.7 C-0.4,1.05 -1,0.9 -1,0.45 C-1,-0.1 -0.2,-0.5 0,-1 Z" fill="#111"/>
<path transform="translate(138.2,478.2) scale(1.25)" d="M0,-1 C0.2,-0.5 1,-0.1 1,0.45 C1,0.9 0.4,1.05 0.1,0.7 C0.15,1 0.3,1.2 0.5,1.3 L-0.5,1.3 C-0.3,1.2 -0.15,1 -0.1,0.7 C-0.4,1.05 -1,0.9 -1,0.45 C-1,-0.1 -0.2,-0.5 0,-1 Z" fill="#111"/>
<path transform="translate(142.7,478.2) scale(1.25)" d="M0,-1 C0.2,-0.5 1,-0.1 1,0.45 C1,0.9 0.4,1.05 0.1,0.7 C0.15,1 0.3,1.2 0.5,1.3 L-0.5,1.3 C-0.3,1.2 -0.15,1 -0.1,0.7 C-0.4,1.05 -1,0.9 -1,0.45 C-1,-0.1 -0.2,-0.5 0,-1 Z" fill="#111"/>
<path transform="translate(155,491) rotate(8) scale(6.6,6.4)" d="M0,-1 C0.2,-0.5 1,-0.1 1,0.45 C1,0.9 0.4,1.05 0.1,0.7 C0.15,1 0.3,1.2 0.5,1.3 L-0.5,1.3 C-0.3,1.2 -0.15,1 -0.1,0.7 C-0.4,1.05 -1,0.9 -1,0.45 C-1,-0.1 -0.2,-0.5 0,-1 Z" fill="url(#gsp)"/>
<text x="155.2" y="493.6" font-family="'Liberation Serif',serif" font-weight="bold" font-size="6" fill="#f2f2f2" text-anchor="middle" transform="rotate(8 155 491)">A</text>
<path d="M144.5,500.5 C148,497.5 158,499 161,503 C157,505.5 148,504.5 144.5,500.5 Z" fill="none" stroke="#444" stroke-width="0.5"/>
<path transform="translate(167.2,509.2) rotate(188) scale(1.2)" d="M0,-1 C0.2,-0.5 1,-0.1 1,0.45 C1,0.9 0.4,1.05 0.1,0.7 C0.15,1 0.3,1.2 0.5,1.3 L-0.5,1.3 C-0.3,1.2 -0.15,1 -0.1,0.7 C-0.4,1.05 -1,0.9 -1,0.45 C-1,-0.1 -0.2,-0.5 0,-1 Z" fill="#111"/>
<text x="165.8" y="514" font-size="3.6" font-weight="bold" fill="#222" transform="rotate(188 166.8 512.8)">A</text>
</g>
<g clip-path="url(#cd2)"><rect x="183" y="460" width="30" height="60" fill="#f8f8f8"/>
<path d="M192.2,482.7 C196,480.6 201,479.4 208,478.8 L208,488.6 C203,489.4 199.5,491.4 196.4,494.4 Z" fill="#e9a08e"/>
<path d="M192.2,482.7 L197.6,492.6 L192.4,500.6 L190.4,496 L185.1,492.4 Z" fill="#ec6d78"/>
</g>
</svg>
</div>
<div class="abs" style="left:206px;top:30px;width:2px;height:498px;background:linear-gradient(90deg,#fff,#f6f6f6)"></div>
<div class="abs" style="left:208px;top:30px;width:4px;height:498px;background:#f6f6f6"></div>
<div class="abs" style="left:208px;top:32px;width:3.6px;height:418.5px;background:#c4c4c4;border-radius:2px"></div>
<!-- TOOLBAR -->
<div id="tb">
<svg class="abs" style="left:0;top:0" width="685" height="26.5" viewBox="213 30.1 685 26.5">
<g fill="none" stroke="#2c2c2c" stroke-width="1.15" stroke-linecap="round" stroke-linejoin="round">
<!-- resize -->
<rect x="228.6" y="38.8" width="8.6" height="8.2" rx="1.8"/>
<path d="M230.6,43.6 L230.6,45.2 L232.2,45.2" stroke-width="0.8"/>
<path d="M232.4,40.8 L235.2,40.8 L235.2,43.6 Z" fill="#2c2c2c" stroke-width="0.6"/>
<path d="M231,44.8 L234.6,41.3" stroke-width="0.8"/>
<!-- theme (palette) -->
<path d="M282.4,38.6 C285,38.6 286.9,40.5 286.9,42.9 C286.9,44.3 285.9,44.9 284.9,44.9 L283.9,44.9 C283.2,44.9 282.9,45.5 283.2,46.1 C283.5,46.7 283.2,47.3 282.4,47.3 C279.9,47.3 277.9,45.4 277.9,42.9 C277.9,40.5 279.9,38.6 282.4,38.6 Z"/>
<circle cx="280.4" cy="41.3" r="0.55" fill="#2c2c2c"/><circle cx="282.9" cy="40.5" r="0.55" fill="#2c2c2c"/><circle cx="284.9" cy="42.2" r="0.55" fill="#2c2c2c"/><circle cx="280" cy="43.9" r="0.55" fill="#2c2c2c"/>
<!-- margins -->
<rect x="414.8" y="38.7" width="8.6" height="8.6" rx="2"/>
<rect x="417" y="40.9" width="4.2" height="4.2" rx="0.9"/>
<!-- translate -->
</g>
<!-- bg color swatch -->
<rect x="329.9" y="38.6" width="9" height="9" rx="2.5" fill="#fbd51c" stroke="#3a3320" stroke-width="1"/>
<!-- align (disabled) -->
<g fill="none" stroke="#c2c2c2" stroke-width="1" stroke-linecap="round">
<path d="M470.6,38.6 L470.6,47.4"/>
<path d="M473,41 L475.4,41" stroke-width="1.4"/>
<path d="M473,45 L477.6,45" stroke-width="1.4"/>
</g>
<!-- translate icon -->
<g fill="none" stroke="#2c2c2c" stroke-width="0.95" stroke-linecap="round" stroke-linejoin="round">
<path d="M516.2,39.9 L521.4,39.9 M518.8,38.8 L518.8,39.9 M520.4,39.9 C520,42 518.4,43.8 516.4,44.6 M517.4,41.4 C518,42.8 519.2,43.8 520.4,44.4"/>
<path d="M520.6,47.6 L522.9,41.9 L525.2,47.6 M521.4,45.8 L524.4,45.8" stroke-width="1.15"/>
</g>
<!-- NEW badge -->
<rect x="559.9" y="38" width="17" height="10" rx="1.6" fill="#d7d7fb"/>
<!-- 35% chevron -->
<path d="M762.8,41.8 L765.2,44.2 L767.6,41.8" fill="none" stroke="#2c2c2c" stroke-width="1.1" stroke-linecap="round" stroke-linejoin="round"/>
<!-- pages icon -->
<g fill="none" stroke="#2c2c2c" stroke-width="1" stroke-linejoin="round" stroke-linecap="round">
<path d="M785.2,40.4 L785.2,39.8 Q785.2,38.6 786.4,38.6 L790.4,38.6 Q791.6,38.6 791.6,39.8 L791.6,43.8 Q791.6,45 790.4,45 L789.8,45"/>
<rect x="782.6" y="40.6" width="7" height="7" rx="1.4"/>
</g>
<text x="786.1" y="46.1" font-size="4.6" font-weight="bold" fill="#2c2c2c" text-anchor="middle" font-family="'Liberation Sans',sans-serif">2</text>
<!-- layer/stack icon -->
<g fill="none" stroke="#2c2c2c" stroke-width="0.95" stroke-linejoin="round" stroke-linecap="round">
<path d="M806,39.2 L806,46.8 M804.7,40.4 L806,39 L807.3,40.4 M804.7,45.6 L806,47 L807.3,45.6"/>
<ellipse cx="811.2" cy="41.4" rx="2.3" ry="1.7"/>
<path d="M808.9,43.6 C808.9,46 813.5,46 813.5,43.6 M808.9,43.4 L808.9,45 M813.5,43.4 L813.5,45" />
<path d="M808.6,44.6 C808.6,47.6 813.8,47.6 813.8,44.6"/>
</g>
<!-- divider -->
<path d="M826.3,33.5 L826.3,51.5" stroke="#e3e3e3" stroke-width="1"/>
<!-- trash -->
<g fill="none" stroke="#2c2c2c" stroke-width="1" stroke-linejoin="round" stroke-linecap="round">
<path d="M835.2,40.6 L843.6,40.6 M837.8,40.4 L837.8,39.4 Q837.8,38.6 838.6,38.6 L840.2,38.6 Q841,38.6 841,39.4 L841,40.4"/>
<path d="M836.2,40.8 L836.2,46.2 Q836.2,47.4 837.4,47.4 L841.4,47.4 Q842.6,47.4 842.6,46.2 L842.6,40.8"/>
<path d="M838.4,42.6 L838.4,45.4 M840.4,42.6 L840.4,45.4" stroke-width="1.1"/>
</g>
<!-- add -->
<circle cx="863.2" cy="43" r="4.3" fill="none" stroke="#2c2c2c" stroke-width="1"/>
<circle cx="863.2" cy="43" r="1.5" fill="#2c2c2c"/>
</svg>
<div class="tt" style="left:28.7px">Resize</div>
<div class="tt" style="left:79px;font-size:6.75px">Theme</div>
<div class="tt" style="left:130.9px;font-size:6.9px">Background color</div>
<div class="tt" style="left:215.8px;font-size:6.75px">Margins</div>
<div class="tt" style="left:270.9px;color:#c4c4c4;font-size:6.7px">Align</div>
<div class="tt" style="left:317px;font-size:6.65px">Translate</div>
<div class="tt" style="left:346.9px;width:17px;text-align:center;font-size:4.7px;font-weight:bold;color:#4646d2;top:10.3px;letter-spacing:0.1px">NEW</div>
<div class="tt" style="left:527.2px;font-weight:bold;font-size:6.8px">35%</div>
<div class="tt" style="left:659.4px">Add</div>
</div>
<div class="abs" style="left:212px;top:29.5px;width:8px;height:26.5px;background:linear-gradient(90deg,#e4e4e4,#fff)"></div>
<!-- CANVAS -->
<div id="cv">
<div class="abs" style="left:110.8px;top:24.3px;font-size:6.9px;line-height:8px;white-space:nowrap;color:#2c2c2c"><b>Page 2 / 2</b> - Add title</div>
<svg class="abs" style="left:16px;top:228px" width="12" height="18" viewBox="0 0 12 18"><path d="M8.3,2.8 L2.8,8.6 L8.3,14.4" fill="none" stroke="#2c2c2c" stroke-width="1.7" stroke-linecap="round" stroke-linejoin="round"/></svg>
</div>
<div class="abs" style="left:212.4px;top:56px;width:1.2px;height:468.5px;background:#e0e0e0"></div>
<!-- DESIGN -->
<svg id="design" class="abs" style="left:320px;top:93.7px" width="471" height="397" viewBox="320 93.7 471 397">
<rect x="320" y="93.7" width="471" height="397" fill="#c961fa"/>
<g stroke="#ffb833" stroke-width="4" stroke-linecap="butt" fill="none"><path d="M320,125.5 L398,121.8"/><path d="M323.5,143.8 L438.5,141.8"/></g>
<path d="M342.8,249.5 C352,245 366,243 378,247 C392,252 399,264 399,280 C399,300 386,312 370,311 C356,310 347.5,299 347.5,285 C347.5,271 357,260.5 371,260.5 C384,260.5 392,270 392,282 C392,292 384,298.5 374,298 C365,297.5 359.5,292 359.5,285 C359.5,278 365,273.5 371,273.8 C376,274 378,278 377.5,282 C377,286 375,287.5 373.5,288" fill="none" stroke="#ff9230" stroke-width="4.5" stroke-linecap="round"/>
<path d="M610,135 C630,125 650,110 664,103.5 C670,101 669,108 667.5,114 C666,121 667,125.5 674,125.5 C684,125.5 695,113 706,110 C716,107.5 724,110 732,113.5 C742,118 756,114 768,109.5 C778,105.5 785,102 791,99" fill="none" stroke="#ff3fdc" stroke-width="3.4" stroke-linecap="round" stroke-linejoin="round"/>
<path d="M758.6,335.2 L758.6,335.3 L758.5,335.3 L758.5,335.3 L757.9,335.3 L757.4,335.4 L756.9,335.6 L756.4,335.9 L756.0,336.4 L755.7,336.9 L755.4,337.5 L755.3,338.1 L755.3,338.8 L755.3,339.6 L755.6,340.3 L755.9,341.0 L756.4,341.7 L757.0,342.4 L757.7,343.0 L758.5,343.5 L759.4,343.8 L760.4,344.1 L761.4,344.3 L762.5,344.3 L763.7,344.2 L764.8,343.9 L765.9,343.4 L767.0,342.9 L768.1,342.1 L769.0,341.2 L769.9,340.2 L770.6,339.0 L771.3,337.8 L771.7,336.4 L772.1,335.0 L772.2,333.5 L772.2,332.0 L772.0,330.4 L771.6,328.9 L771.0,327.4 L770.2,325.9 L769.2,324.5 L768.1,323.3 L766.8,322.1 L765.4,321.1 L763.8,320.2 L762.1,319.6 L760.3,319.1 L758.5,318.8 L756.6,318.7 L754.7,318.9 L752.8,319.3 L750.9,319.8 L749.1,320.7 L747.4,321.7 L745.8,322.9 L744.3,324.3 L743.0,325.9 L741.8,327.7 L740.8,329.6 L740.1,331.6 L739.6,333.7 L739.3,335.9 L739.3,338.1 L739.5,340.4 L740.0,342.6 L740.7,344.7 L741.7,346.8 L742.9,348.8 L744.3,350.7 L746.0,352.4 L747.8,353.9 L749.9,355.2 L752.0,356.3 L754.4,357.1 L756.8,357.7 L759.3,358.0 L761.8,358.0 L764.3,357.8 L766.8,357.3 L769.3,356.4 L771.7,355.3 L774.0,354.0 L776.1,352.3 L778.0,350.5 L779.7,348.4 L781.3,346.1 L782.5,343.6 L783.5,341.0 L784.2,338.3 L784.6,335.4 L784.6,332.6 L784.4,329.7 L783.8,326.8 L782.9,324.0 L781.7,321.3 L780.2,318.7 L778.4,316.2 L776.3,314.0 L773.9,312.0 L771.3,310.2 L768.5,308.7 L765.5,307.5 L762.4,306.7 L759.2,306.2 L755.9,306.1 L752.6,306.3 L749.3,306.9 L746.0,307.8 L742.8,309.2 L739.8,310.9 L736.9,312.9 L734.3,315.3 L731.9,318.0 L729.8,321.0 L728.0,324.2 L726.5,327.6 L725.5,331.2 L724.8,335.0 L724.6,338.8 L724.8,342.7 L725.4,346.6 L726.4,350.5 L727.9,354.2 L729.9,357.8 L732.2,361.3 L734.9,364.4 L738.0,367.3 L741.5,369.9 L745.3,372.1 L749.3,373.9 L753.6,375.2 L758.0,376.1 L762.6,376.5 L767.2,376.4 L771.9,375.7 L776.5,374.6 L781.1,372.9 L785.4,370.7 L789.6,367.9" fill="none" stroke="#fcc32c" stroke-width="5.3" stroke-linecap="round" stroke-linejoin="round"/>
<path d="M320,465 C340,455 360,448.5 378,448 C390,447.7 400,450 410,452 C425,455 440,446 452,446 C460,446 462,450 460.5,456 C459,462 456,467 457.5,470.5 C459,474 466,472 474,468 C484,463 492,457 500,451" fill="none" stroke="#ff9230" stroke-width="3.4" stroke-linecap="round" stroke-linejoin="round"/>
<circle cx="560.2" cy="291.8" r="172" fill="#4bdd52"/>
<path transform="translate(360.5,110.5) rotate(-8,0,9.7) scale(24,23.89)" d="M0,0.9 C-0.15,0.75 -0.5,0.5 -0.5,0.25 C-0.5,0.05 -0.35,0 -0.25,0 C-0.12,0 -0.03,0.08 0,0.18 C0.03,0.08 0.12,0 0.25,0 C0.35,0 0.5,0.05 0.5,0.25 C0.5,0.5 0.15,0.75 0,0.9 Z" fill="#ff3fdc"/>
<path transform="translate(391,135.7) rotate(0,0,19.6) scale(52.5,48.33)" d="M0,0.9 C-0.15,0.75 -0.5,0.5 -0.5,0.25 C-0.5,0.05 -0.35,0 -0.25,0 C-0.12,0 -0.03,0.08 0,0.18 C0.03,0.08 0.12,0 0.25,0 C0.35,0 0.5,0.05 0.5,0.25 C0.5,0.5 0.15,0.75 0,0.9 Z" fill="#ff3fdc"/>
<path transform="translate(430,124) rotate(10,0,9.7) scale(20.5,23.89)" d="M0,0.9 C-0.15,0.75 -0.5,0.5 -0.5,0.25 C-0.5,0.05 -0.35,0 -0.25,0 C-0.12,0 -0.03,0.08 0,0.18 C0.03,0.08 0.12,0 0.25,0 C0.35,0 0.5,0.05 0.5,0.25 C0.5,0.5 0.15,0.75 0,0.9 Z" fill="#ff3fdc"/>
<path transform="translate(359.3,173.3) rotate(-24,0,10.1) scale(24,25.00)" d="M0,0.9 C-0.15,0.75 -0.5,0.5 -0.5,0.25 C-0.5,0.05 -0.35,0 -0.25,0 C-0.12,0 -0.03,0.08 0,0.18 C0.03,0.08 0.12,0 0.25,0 C0.35,0 0.5,0.05 0.5,0.25 C0.5,0.5 0.15,0.75 0,0.9 Z" fill="#ff3fdc"/>
<path transform="translate(424,173) rotate(24,0,9.7) scale(22,23.89)" d="M0,0.9 C-0.15,0.75 -0.5,0.5 -0.5,0.25 C-0.5,0.05 -0.35,0 -0.25,0 C-0.12,0 -0.03,0.08 0,0.18 C0.03,0.08 0.12,0 0.25,0 C0.35,0 0.5,0.05 0.5,0.25 C0.5,0.5 0.15,0.75 0,0.9 Z" fill="#ff3fdc"/>
<g fill="none" stroke="#ff9230" stroke-linecap="round" stroke-linejoin="round">
<path d="M737,106 C733,112 730,120 730.5,130 C731,136 737,138 738.5,143 C739.5,148 735,150 730,148" stroke-width="8"/>
<path d="M735,140 C742,146 737,152 729,147.5" stroke-width="9"/>
<path d="M729,147.5 C721,143 716,131 702,129 C692,128 686,134 688.5,141 C692,151 712,158 727,169 C734,175 735,184 727,186 C717,187 708,172 693,167.5 C685,166 681,171 683.5,178 C686,185 692,187 696,190" stroke-width="10.5"/>
</g>
<path d="M743.5,95 L746,107 L738,117 L729.5,112 L731.5,104 Z" fill="#ff9230" stroke="#ff9230" stroke-width="2" stroke-linejoin="round"/>
<path d="M699,186 C705,191 708,198 702,202 C696,205.5 690,204 683.5,203 C690,201.5 697,200 697,196.5 C697,193 694,191 691.5,189 Z" fill="#ff9230"/>
<g fill="#ff3fdc">
<path d="M652.5,415 C662,407 674,399.5 685.5,398 C697,399 708,406 716,413 C706,420 695,421.5 684,421.5 L679,411 L678,421.3 C667,421 658,418.5 652.5,415 Z"/>
<path d="M684,420 L688.3,420 L688,443 L684,443 Z"/>
<path d="M700,434.5 C708,429 716,423.5 724,423 C733,423.5 741,429 748,434.5 C741,439 733,440 726,440 L720.5,433 L719.8,440 C711,440 705,438 700,434.5 Z"/>
<path d="M724,439 L728.5,439 C727,448 733,456 731,466 C729,476 726,482 726.5,490.7 L720.5,490.7 C720,482 725,474 726.5,465 C728,456 723.5,448 724,439 Z"/>
<path d="M645.7,451.5 C653,446 663,440 672,439.5 C681,440 690,445.5 695.7,450.5 C688,456 680,457.5 672,457.5 C662,457.5 652,456 645.7,451.5 Z"/>
<path d="M672,456 L677,456 C673,468 671,478 674.5,490.7 L668.5,490.7 C666,478 668,467 672,456 Z"/>
<path d="M684,456 L689,456 C692,468 694,478 694.5,490.7 L689.5,490.7 C689.5,478 687,467 684,456 Z"/>
<path d="M699,466 C701,474 702,482 702,490.7 L700,490.7 C700,482 699.5,474 699,466 Z"/>
</g>
<g fill="#ffc72c" stroke="none">
<path d="M394.8,392.5 L412,428" stroke="#ffc72c" stroke-width="10.5" stroke-linecap="round" fill="none"/>
<path d="M421,384 L421.5,428" stroke="#ffc72c" stroke-width="10.5" stroke-linecap="round" fill="none"/>
<path d="M433,407.5 L433,436" stroke="#ffc72c" stroke-width="9.5" stroke-linecap="round" fill="none"/>
<path d="M445.7,416.5 L445.7,436" stroke="#ffc72c" stroke-width="9.5" stroke-linecap="round" fill="none"/>
<path d="M391,434 C391,428 396,426.5 402,426 L450.5,424 L451,448 C451,462 440,471 423,471 C404,471 393,462 392,448 Z"/>
</g>
<g fill="none" stroke="#c06ad8" stroke-width="1.2" stroke-linecap="round">
<path d="M398,429.5 C408,428 418,425 425.5,422.5"/>
<path d="M425.5,432 C420,436 412,438 408.5,441 C406,444 409,448 411,452"/>
<path d="M427.5,430 C431,434 435,435.5 439,434 C443,436 447,435.5 450,432.5"/>
</g>
<circle cx="560.3" cy="218" r="58" fill="none" stroke="#000" stroke-width="2.9"/>
<circle cx="539" cy="200.6" r="8.2" fill="#000"/><circle cx="581" cy="200.6" r="8.2" fill="#000"/>
<path d="M534,235.5 C544,253.5 577,253.5 586.7,235.5" fill="none" stroke="#000" stroke-width="12" stroke-linecap="round"/>
<path transform="translate(521,171.2) rotate(-8)" d="M0,-12.25 C2.5500000000000003,-3.9200000000000004 4.080000000000001,-2.45 12.75,0 C4.080000000000001,2.45 2.5500000000000003,3.9200000000000004 0,12.25 C-2.5500000000000003,3.9200000000000004 -4.080000000000001,2.45 -12.75,0 C-4.080000000000001,-2.45 -2.5500000000000003,-3.9200000000000004 0,-12.25 Z" fill="#4bdd52" stroke="#000" stroke-width="2.2" stroke-linejoin="miter"/>
<path transform="translate(618,206) rotate(5)" d="M0,-12.75 C2.85,-4.080000000000001 4.5600000000000005,-2.5500000000000003 14.25,0 C4.5600000000000005,2.5500000000000003 2.85,4.080000000000001 0,12.75 C-2.85,4.080000000000001 -4.5600000000000005,2.5500000000000003 -14.25,0 C-4.5600000000000005,-2.5500000000000003 -2.85,-4.080000000000001 0,-12.75 Z" fill="#4bdd52" stroke="#000" stroke-width="2.2" stroke-linejoin="miter"/>
<path transform="translate(505,246.7) rotate(8)" d="M0,-9.75 C2.25,-3.1200000000000006 3.6,-1.9500000000000002 11.25,0 C3.6,1.9500000000000002 2.25,3.1200000000000006 0,9.75 C-2.25,3.1200000000000006 -3.6,1.9500000000000002 -11.25,0 C-3.6,-1.9500000000000002 -2.25,-3.1200000000000006 0,-9.75 Z" fill="#4bdd52" stroke="#000" stroke-width="2.2" stroke-linejoin="miter"/>
<path transform="translate(589.7,272.4) rotate(5)" d="M0,-10.25 C1.85,-3.2800000000000007 2.9600000000000004,-2.0500000000000003 9.25,0 C2.9600000000000004,2.0500000000000003 1.85,3.2800000000000007 0,10.25 C-1.85,3.2800000000000007 -2.9600000000000004,2.0500000000000003 -9.25,0 C-2.9600000000000004,-2.0500000000000003 -1.85,-3.2800000000000007 0,-10.25 Z" fill="#4bdd52" stroke="#000" stroke-width="2.2" stroke-linejoin="miter"/>
<g font-family="'Liberation Serif','DejaVu Serif',serif" font-weight="bold" font-size="57.5" fill="#000" stroke="#000" stroke-width="3.2" stroke-linejoin="round">
<text x="453.4" y="336.9" textLength="205.5" lengthAdjust="spacingAndGlyphs">Dream</text>
<text x="457.4" y="387.5" textLength="197" lengthAdjust="spacingAndGlyphs">Bigger</text>
</g>
</svg>
</body>
</html>
